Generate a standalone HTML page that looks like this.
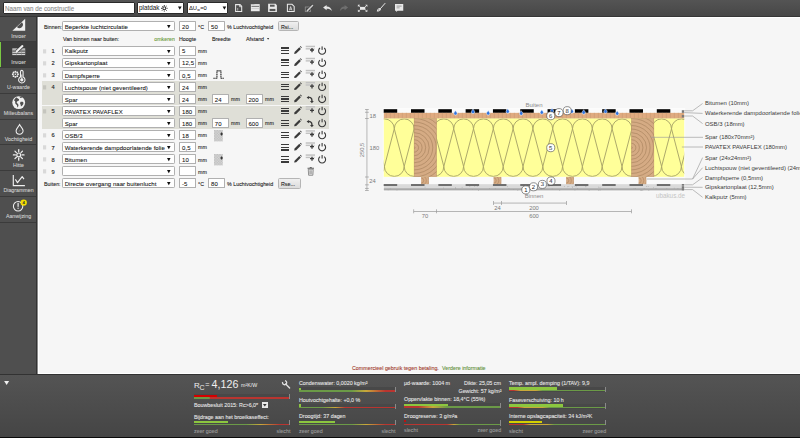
<!DOCTYPE html><html><head><meta charset="utf-8"><style>
*{box-sizing:border-box;margin:0;padding:0}
html,body{width:800px;height:438px;overflow:hidden}
body{background:#f6f6f6;font-family:"Liberation Sans",sans-serif;position:relative;color:#333}
.a{position:absolute;white-space:nowrap}
.t{position:absolute;white-space:nowrap;line-height:1}
.sel{position:absolute;background:#fff;border:1px solid #b0b0b0;border-radius:1.2px}
.v{position:absolute;left:1.8px;top:1.6px;bottom:0;display:flex;align-items:center;color:#111;white-space:nowrap;-webkit-text-stroke:0.07px #111}
.ar{position:absolute;right:2.2px;top:0;bottom:0;display:flex;align-items:center;font-size:5px;color:#111}
.inp{position:absolute;background:#fff;border:1px solid #b0b0b0;border-radius:0.6px}
svg{position:absolute;overflow:visible}
.sbl{position:absolute;left:0;width:37px;text-align:center;font-size:5.8px;color:#d4d4d4;line-height:1;transform:scaleX(0.91);-webkit-text-stroke:0.08px #d4d4d4}
</style></head><body>
<div class="a" style="left:0;top:0;width:800px;height:16.5px;background:linear-gradient(#545454,#474747);border-bottom:1.2px solid #363636"></div>
<div class="a" style="left:37px;top:16.5px;width:763px;height:1px;background:#fff"></div>
<div class="a" style="left:2.5px;top:2.2px;width:132px;height:11.8px;background:#fff;border:0.6px solid #2a2a2a;border-radius:1px"></div>
<div class="t" style="left:5.2px;top:5.80px;font-size:6.8px;color:#8a8a8a;transform:scaleX(0.92);transform-origin:0 50%;-webkit-text-stroke:0.1px #8a8a8a">Naam van de constructie</div>
<div class="a" style="left:136.7px;top:2.2px;width:47.2px;height:11.8px;background:#fff;border:0.6px solid #2a2a2a;border-radius:1px"></div>
<div class="a" style="left:186.7px;top:2.2px;width:41.6px;height:11.8px;background:#fff;border:0.6px solid #2a2a2a;border-radius:1px"></div>
<svg style="left:0;top:0" width="240" height="17" viewBox="0 0 240 17"><g font-family="Liberation Sans" fill="#1a1a1a" stroke="#1a1a1a" stroke-width="0.04"><text x="139" y="9.8" font-size="6.35">platdak</text><text x="189" y="9.6" font-size="5.8">&#916;U</text><text x="197.2" y="11.0" font-size="3.6">w</text><text x="200.2" y="9.6" font-size="5.8">=0</text></g><path d="M178 6.6h3.6l-1.8 3.2z" fill="#111"/><path d="M222.6 6.6h3.6l-1.8 3.2z" fill="#111"/><circle cx="164.3" cy="8.3" r="1.5" fill="none" stroke="#333" stroke-width="1.1"/><line x1="166.60" y1="8.30" x2="167.60" y2="8.30" stroke="#333" stroke-width="1.0"/><line x1="165.93" y1="9.93" x2="166.63" y2="10.63" stroke="#333" stroke-width="1.0"/><line x1="164.30" y1="10.60" x2="164.30" y2="11.60" stroke="#333" stroke-width="1.0"/><line x1="162.67" y1="9.93" x2="161.97" y2="10.63" stroke="#333" stroke-width="1.0"/><line x1="162.00" y1="8.30" x2="161.00" y2="8.30" stroke="#333" stroke-width="1.0"/><line x1="162.67" y1="6.67" x2="161.97" y2="5.97" stroke="#333" stroke-width="1.0"/><line x1="164.30" y1="6.00" x2="164.30" y2="5.00" stroke="#333" stroke-width="1.0"/><line x1="165.93" y1="6.67" x2="166.63" y2="5.97" stroke="#333" stroke-width="1.0"/></svg>
<svg style="left:0;top:0" width="410" height="17" viewBox="0 0 410 17"><path d="M235.6 4.6H240L241.7 6.3V11.4H235.6z" fill="none" stroke="#e8e8e8" stroke-width="1.05"/><path d="M239.6 4.6V6.7H241.7" fill="none" stroke="#e8e8e8" stroke-width="0.8"/><rect x="237.2" y="8.0" width="1.0" height="2.6" fill="#e8e8e8" opacity="0.6"/><rect x="250.9" y="4.1" width="8.8" height="7.15" fill="#e8e8e8"/><rect x="250.9" y="4.1" width="3.5" height="0.9" fill="#bdbdbd"/><rect x="251.5" y="5.9" width="7.6" height="0.8" fill="#555"/><rect x="251.5" y="8.6" width="7.6" height="0.4" fill="#aaa"/><path d="M268.1 3.8H275.5L276.9 5.2V11.9H268.1z" fill="#e8e8e8"/><rect x="270.0" y="4.7" width="4.6" height="2.0" fill="#555"/><rect x="269.6" y="8.9" width="5.8" height="2.2" fill="#555"/><path d="M287.4 4.3H292L294.2 6.5V11.5H287.4z" fill="none" stroke="#e8e8e8" stroke-width="1.05"/><path d="M289.4 10.3L290.6 6.6L291.9 10.3M289.9 9.2H291.4" fill="none" stroke="#e8e8e8" stroke-width="0.75"/><rect x="305.3" y="7.0" width="5.2" height="4.6" fill="none" stroke="#8a8a8a" stroke-width="0.9"/><path d="M307.2 10.8L312.6 5.4" stroke="#2f2f2f" stroke-width="2.6"/><path d="M307.4 10.6L312.5 5.5" stroke="#cfcfcf" stroke-width="1.5" stroke-linecap="round"/><path d="M323.1 7.4L326.6 4.9V6.5C329.5 6.6 331.4 8.2 332.0 11.0C330.6 9.4 329.0 8.8 326.6 8.8V10.2z" fill="#e8e8e8"/><path d="M348.1 7.4L344.6 4.9V6.5C341.7 6.6 340.0 8.2 340.0 11.0C341.4 9.4 342.2 8.8 344.6 8.8V10.2z" fill="#6f6f6f"/><rect x="360.0" y="6.9" width="5.3" height="2.9" fill="#e8e8e8"/><path d="M357.9 4.8h2.2l-2.2 2.2z" fill="#e8e8e8"/><path d="M358.7 5.6l1.6 1.3" stroke="#e8e8e8" stroke-width="0.8"/><path d="M367.4 4.8h-2.2l2.2 2.2z" fill="#e8e8e8"/><path d="M366.59999999999997 5.6l-1.6 1.3" stroke="#e8e8e8" stroke-width="0.8"/><path d="M357.9 11.8h2.2l-2.2 -2.2z" fill="#e8e8e8"/><path d="M358.7 11.0l1.6 -1.3" stroke="#e8e8e8" stroke-width="0.8"/><path d="M367.4 11.8h-2.2l2.2 -2.2z" fill="#e8e8e8"/><path d="M366.59999999999997 11.0l-1.6 -1.3" stroke="#e8e8e8" stroke-width="0.8"/><path d="M385.0 3.4L380.4 8.6" stroke="#e8e8e8" stroke-width="1.0" stroke-linecap="round"/><path d="M379.6 8.0C377.6 8.2 377.2 10.0 376.8 11.5C378.6 11.6 380.6 11.0 381.0 9.2z" fill="#e8e8e8"/><circle cx="378.8" cy="9.9" r="0.6" fill="#666"/><path d="M395.0 4.0H403.25V10.7H397.6L396.2 12.0V10.7H395.0z" fill="#e8e8e8"/><rect x="396.6" y="5.6" width="5.0" height="1.0" fill="#9a9a9a"/><rect x="396.6" y="7.4" width="3.0" height="0.9" fill="#9a9a9a"/></svg>
<div class="a" style="left:0;top:16.5px;width:37px;height:358px;background:#4f4f4f;border-right:1px solid #333"></div>
<div class="a" style="left:37px;top:16.5px;width:1px;height:358px;background:#8a8a8a"></div>
<div class="a" style="left:38px;top:17px;width:1px;height:358px;background:#fff"></div>
<div class="a" style="left:0;top:41.37px;width:36px;height:1px;background:#3b3b3b"></div>
<div class="sbl" style="top:33.80px">Invoer</div>
<div class="a" style="left:0;top:41.97px;width:36px;height:25.77px;background:#3d3d3d"></div>
<div class="a" style="left:0;top:41.97px;width:1.3px;height:25.77px;background:#7ac943"></div>
<div class="a" style="left:0;top:67.14px;width:36px;height:1px;background:#3b3b3b"></div>
<div class="sbl" style="top:59.57px">Invoer</div>
<div class="a" style="left:0;top:92.91px;width:36px;height:1px;background:#3b3b3b"></div>
<div class="sbl" style="top:85.34px">U-waarde</div>
<div class="a" style="left:0;top:118.68px;width:36px;height:1px;background:#3b3b3b"></div>
<div class="sbl" style="top:111.11px">Milieubalans</div>
<div class="a" style="left:0;top:144.45px;width:36px;height:1px;background:#3b3b3b"></div>
<div class="sbl" style="top:136.88px">Vochtigheid</div>
<div class="a" style="left:0;top:170.22px;width:36px;height:1px;background:#3b3b3b"></div>
<div class="sbl" style="top:162.65px">Hitte</div>
<div class="a" style="left:0;top:195.99px;width:36px;height:1px;background:#3b3b3b"></div>
<div class="sbl" style="top:188.42px">Diagrammen</div>
<div class="a" style="left:0;top:221.76px;width:36px;height:1px;background:#3b3b3b"></div>
<div class="sbl" style="top:214.19px">Aanwijzing</div>
<svg style="left:0;top:0" width="37" height="230" viewBox="0 0 37 230"><path d="M12.4 30.8L25.2 18.7V30.8z" fill="#f0f0f0"/><path d="M16.9 27.0A3.3 3.3 0 0 0 21.9 22.3z" fill="#4f4f4f"/><rect x="12.3" y="48.4" width="12.9" height="6.7" fill="#d8d8d8"/><rect x="12.3" y="49.8" width="12.9" height="0.7" fill="#3d3d3d"/><rect x="12.3" y="51.4" width="12.9" height="0.7" fill="#3d3d3d"/><rect x="12.3" y="53.0" width="12.9" height="0.7" fill="#3d3d3d"/><rect x="16.2" y="48.4" width="0.5" height="6.7" fill="#8a8a8a"/><rect x="21.3" y="48.4" width="0.5" height="6.7" fill="#8a8a8a"/><path d="M16.6 51.6L22.6 45.9" stroke="#3d3d3d" stroke-width="3.4"/><path d="M16.9 51.2L22.4 46.1" stroke="#f0f0f0" stroke-width="2.1" stroke-linecap="round"/><path d="M15.6 52.9L16.5 51.3 17.6 52.2z" fill="#f0f0f0"/><circle cx="18.00" cy="74.30" r="0.95" fill="#f0f0f0"/><circle cx="17.24" cy="76.14" r="0.95" fill="#f0f0f0"/><circle cx="15.40" cy="76.90" r="0.95" fill="#f0f0f0"/><circle cx="13.56" cy="76.14" r="0.95" fill="#f0f0f0"/><circle cx="12.80" cy="74.30" r="0.95" fill="#f0f0f0"/><circle cx="13.56" cy="72.46" r="0.95" fill="#f0f0f0"/><circle cx="15.40" cy="71.70" r="0.95" fill="#f0f0f0"/><circle cx="17.24" cy="72.46" r="0.95" fill="#f0f0f0"/><circle cx="15.4" cy="74.3" r="0.8" fill="#f0f0f0"/><path d="M20.5 76.9V71.7a1.3 1.3 0 0 1 2.6 0V76.9a3.2 3.2 0 1 1 -2.6 0z" fill="none" stroke="#f0f0f0" stroke-width="1.05"/><circle cx="21.8" cy="79.8" r="1.6" fill="#f0f0f0"/><rect x="21.35" y="74.5" width="0.9" height="5" fill="#f0f0f0"/><circle cx="18.7" cy="102.6" r="6.4" fill="#f0f0f0"/><path d="M16.6 97.2c-1.2 0.8-2.4 2.0-2.6 3.4c0.8 0.2 1.4 0.8 1.2 1.8c-0.2 1.2 0.8 1.8 1.6 2.6c0.4 0.6 0.2 1.6 0.6 2.4c0.8-0.6 1.2-1.6 1.0-2.6c-0.2-0.8-1.2-1.2-1.6-2.0c-0.4-0.8 0.4-1.6 1.2-1.8c1.0-0.2 1.4-1.2 0.8-2.0c-0.6-0.6-1.8-0.6-2.2-1.8z" fill="#4f4f4f"/><path d="M20.6 101.8c0.8 0.2 1.6-0.2 2.4 0.2c0.6 0.4 0.6 1.4 0.2 2.2c-0.4 1.0-1.2 1.8-2.2 2.4c-0.4-0.8 0-1.8-0.6-2.4c-0.6-0.6-0.2-1.6 0.2-2.4z" fill="#4f4f4f"/><path d="M19.6 96.8c1.0 0 2.0 0.4 2.6 1.0c-0.6 0.4-1.4 0.2-2.0 0c-0.4-0.2-0.6-0.6-0.6-1.0z" fill="#4f4f4f"/><path d="M19.6 124.6C18.6 126.6 16.1 128.6 16.1 130.7a3.5 3.5 0 0 0 7 0C23.1 128.6 20.6 126.6 19.6 124.6z" fill="none" stroke="#f0f0f0" stroke-width="1.05"/><path d="M19.0 131.8a1.2 1.2 0 0 1 1.6-1.4" fill="none" stroke="#9a9a9a" stroke-width="0.6"/><circle cx="18.7" cy="154.9" r="1.9" fill="none" stroke="#f0f0f0" stroke-width="1.2"/><line x1="18.70" y1="151.60" x2="18.70" y2="149.60" stroke="#f0f0f0" stroke-width="1.25" stroke-linecap="round"/><line x1="21.03" y1="152.57" x2="22.45" y2="151.15" stroke="#f0f0f0" stroke-width="1.25" stroke-linecap="round"/><line x1="22.00" y1="154.90" x2="24.00" y2="154.90" stroke="#f0f0f0" stroke-width="1.25" stroke-linecap="round"/><line x1="21.03" y1="157.23" x2="22.45" y2="158.65" stroke="#f0f0f0" stroke-width="1.25" stroke-linecap="round"/><line x1="18.70" y1="158.20" x2="18.70" y2="160.20" stroke="#f0f0f0" stroke-width="1.25" stroke-linecap="round"/><line x1="16.37" y1="157.23" x2="14.95" y2="158.65" stroke="#f0f0f0" stroke-width="1.25" stroke-linecap="round"/><line x1="15.40" y1="154.90" x2="13.40" y2="154.90" stroke="#f0f0f0" stroke-width="1.25" stroke-linecap="round"/><line x1="16.37" y1="152.57" x2="14.95" y2="151.15" stroke="#f0f0f0" stroke-width="1.25" stroke-linecap="round"/><path d="M13.3 175V185.6H24.9" fill="none" stroke="#f0f0f0" stroke-width="1.15"/><path d="M15.4 179.4L17.5 182.7L22.2 176.7L24 179.1" fill="none" stroke="#f0f0f0" stroke-width="1.15" stroke-linejoin="round"/><circle cx="18.1" cy="206.2" r="4.7" fill="none" stroke="#f0f0f0" stroke-width="1.05"/><rect x="17.5" y="202.9" width="1.2" height="3.9" fill="#f0f0f0"/><rect x="17.5" y="207.7" width="1.2" height="1.1" fill="#f0f0f0"/><circle cx="23.7" cy="202.6" r="3.2" fill="#f2dc00"/><text x="23.7" y="204.2" font-size="4.3" text-anchor="middle" fill="#333" font-family="Liberation Sans" font-weight="bold">4</text></svg>
<div class="a" style="left:41.8px;top:81px;width:287.4px;height:24.2px;background:#dfdfd7"></div>
<div class="a" style="left:41.8px;top:105.7px;width:287.4px;height:23.3px;background:#dfdfd7"></div>
<div class="t" style="left:44px;top:24.76px;font-size:5.9px;color:#1c1c1c;transform:scaleX(0.905);transform-origin:0 50%;-webkit-text-stroke:0.1px #1c1c1c;">Binnen:</div>
<div class="sel" style="left:62.4px;top:21.46px;width:112.19999999999999px;height:10.0px;border-color:#b0b0b0"><div class="v" style="left:1.3px;font-size:6.0px;letter-spacing:0.05px">Beperkte luchtcirculatie</div><svg style="right:3.4px;top:3px" width="3.6" height="3.2" viewBox="0 0 10 9"><path d="M0 0h10L5 9z" fill="#111"/></svg></div>
<div class="inp" style="left:179.2px;top:21.46px;width:16.80000000000001px;height:10.0px"><div class="v" style="left:1.8px;font-size:6.0px;letter-spacing:0.1px">20</div></div>
<div class="t" style="left:197.5px;top:24.76px;font-size:5.9px;color:#1c1c1c;transform:scaleX(0.905);transform-origin:0 50%;-webkit-text-stroke:0.1px #1c1c1c;">&deg;C</div>
<div class="inp" style="left:208.2px;top:21.46px;width:16.600000000000023px;height:10.0px"><div class="v" style="left:1.8px;font-size:6.0px;letter-spacing:0.1px">50</div></div>
<div class="t" style="left:226.8px;top:24.76px;font-size:5.9px;color:#1c1c1c;transform:scaleX(0.905);transform-origin:0 50%;-webkit-text-stroke:0.1px #1c1c1c;">% Luchtvochtigheid</div>
<div class="a" style="left:278.2px;top:21.26px;width:20.6px;height:10.2px;background:linear-gradient(#f0f0f0,#dcdcdc);border:0.8px solid #b5b5b5;border-radius:1.5px"></div>
<div class="t" style="left:281.2px;top:24.76px;font-size:5.9px;color:#1c1c1c;transform:scaleX(0.905);transform-origin:0 50%;-webkit-text-stroke:0.1px #1c1c1c;">Rsi...</div>
<div class="t" style="left:62.6px;top:36.83px;font-size:5.9px;color:#1c1c1c;transform:scaleX(0.905);transform-origin:0 50%;-webkit-text-stroke:0.1px #1c1c1c;">Van binnen naar buiten:</div>
<div class="t" style="right:625.2px;top:36.83px;font-size:5.9px;color:#6a9a3a;text-align:right;transform:scaleX(0.905);transform-origin:100% 50%;-webkit-text-stroke:0.1px #6a9a3a;">omkeren</div>
<div class="t" style="left:179.3px;top:36.83px;font-size:5.9px;color:#1c1c1c;transform:scaleX(0.905);transform-origin:0 50%;-webkit-text-stroke:0.1px #1c1c1c;">Hoogte</div>
<div class="t" style="left:212px;top:36.83px;font-size:5.9px;color:#1c1c1c;transform:scaleX(0.905);transform-origin:0 50%;-webkit-text-stroke:0.1px #1c1c1c;">Breedte</div>
<div class="t" style="left:246px;top:36.83px;font-size:5.9px;color:#1c1c1c;transform:scaleX(0.905);transform-origin:0 50%;-webkit-text-stroke:0.1px #1c1c1c;">Afstand</div>
<svg style="left:267.2px;top:38.33px" width="2.2" height="1.8" viewBox="0 0 10 8"><path d="M0 0h10L5 8z" fill="#333"/></svg>
<svg style="left:43.3px;top:48.50px" width="3.2" height="4.6" viewBox="0 0 3.2 4.6"><rect x="0" y="0" width="3.2" height="4.6" fill="rgba(0,0,0,0.085)"/><g fill="rgba(0,0,0,0.06)"><rect x="0" y="1.1" width="3.2" height="0.5"/><rect x="0" y="2.3" width="3.2" height="0.5"/><rect x="0" y="3.5" width="3.2" height="0.5"/></g></svg>
<div class="t" style="left:51.6px;top:49.00px;font-size:5.7px;color:#222;-webkit-text-stroke:0.12px #222">1</div>
<div class="sel" style="left:62.4px;top:45.6px;width:112.19999999999999px;height:10.0px;border-color:#b0b0b0"><div class="v" style="left:1.3px;font-size:6.0px;letter-spacing:0.05px">Kalkputz</div><svg style="right:3.4px;top:3px" width="3.6" height="3.2" viewBox="0 0 10 9"><path d="M0 0h10L5 9z" fill="#111"/></svg></div>
<div class="inp" style="left:179.2px;top:45.6px;width:16.80000000000001px;height:10.0px"><div class="v" style="left:1.8px;font-size:6.0px;letter-spacing:0.1px">5</div></div>
<div class="t" style="left:197.6px;top:48.90px;font-size:5.9px;color:#1c1c1c;transform:scaleX(0.905);transform-origin:0 50%;-webkit-text-stroke:0.1px #1c1c1c;">mm</div>
<div class="a" style="left:281.1px;top:47.40px;width:7.8px;height:1.2px;background:#3a3a3a"></div>
<div class="a" style="left:281.1px;top:50.10px;width:7.8px;height:1.2px;background:#3a3a3a"></div>
<div class="a" style="left:281.1px;top:52.80px;width:7.8px;height:1.2px;background:#3a3a3a"></div>
<svg style="left:0;top:0" width="800" height="438" viewBox="0 0 800 438"><path d="M294.1 53.90L294.6 52.00L299.3 47.30L300.9 48.90L296.2 53.60z" fill="#3a3a3a"/><path d="M299.9 46.70L300.5 46.10L301.9 47.50L301.3 48.10z" fill="#3a3a3a"/><rect x="305.7" y="45.70" width="9.3" height="1.5" fill="#c2c2c2"/><rect x="305.7" y="48.10" width="4.6" height="1.4" fill="#c2c2c2"/><rect x="310.3" y="48.10" width="4.7" height="1.4" fill="#dadada"/><path d="M310 50.00H314M312 48.00V52.20" stroke="#3a3a3a" stroke-width="1.3"/><path d="M320.0 48.00A3.5 3.5 0 1 0 324.2 48.00" fill="none" stroke="#3a3a3a" stroke-width="1.1"/><rect x="321.55" y="46.40" width="1.1" height="3.5" fill="#3a3a3a"/></svg>
<svg style="left:43.3px;top:60.57px" width="3.2" height="4.6" viewBox="0 0 3.2 4.6"><rect x="0" y="0" width="3.2" height="4.6" fill="rgba(0,0,0,0.085)"/><g fill="rgba(0,0,0,0.06)"><rect x="0" y="1.1" width="3.2" height="0.5"/><rect x="0" y="2.3" width="3.2" height="0.5"/><rect x="0" y="3.5" width="3.2" height="0.5"/></g></svg>
<div class="t" style="left:51.6px;top:61.07px;font-size:5.7px;color:#222;-webkit-text-stroke:0.12px #222">2</div>
<div class="sel" style="left:62.4px;top:57.67px;width:112.19999999999999px;height:10.0px;border-color:#b0b0b0"><div class="v" style="left:1.3px;font-size:6.0px;letter-spacing:0.05px">Gipskartonplaat</div><svg style="right:3.4px;top:3px" width="3.6" height="3.2" viewBox="0 0 10 9"><path d="M0 0h10L5 9z" fill="#111"/></svg></div>
<div class="inp" style="left:179.2px;top:57.67px;width:16.80000000000001px;height:10.0px"><div class="v" style="left:1.8px;font-size:6.0px;letter-spacing:0.1px">12,5</div></div>
<div class="t" style="left:197.6px;top:60.97px;font-size:5.9px;color:#1c1c1c;transform:scaleX(0.905);transform-origin:0 50%;-webkit-text-stroke:0.1px #1c1c1c;">mm</div>
<div class="a" style="left:281.1px;top:59.47px;width:7.8px;height:1.2px;background:#3a3a3a"></div>
<div class="a" style="left:281.1px;top:62.17px;width:7.8px;height:1.2px;background:#3a3a3a"></div>
<div class="a" style="left:281.1px;top:64.87px;width:7.8px;height:1.2px;background:#3a3a3a"></div>
<svg style="left:0;top:0" width="800" height="438" viewBox="0 0 800 438"><path d="M294.1 65.97L294.6 64.07L299.3 59.37L300.9 60.97L296.2 65.67z" fill="#3a3a3a"/><path d="M299.9 58.77L300.5 58.17L301.9 59.57L301.3 60.17z" fill="#3a3a3a"/><rect x="305.7" y="57.77" width="9.3" height="1.5" fill="#c2c2c2"/><rect x="305.7" y="60.17" width="4.6" height="1.4" fill="#c2c2c2"/><rect x="310.3" y="60.17" width="4.7" height="1.4" fill="#dadada"/><path d="M310 62.07H314M312 60.07V64.27" stroke="#3a3a3a" stroke-width="1.3"/><path d="M320.0 60.07A3.5 3.5 0 1 0 324.2 60.07" fill="none" stroke="#3a3a3a" stroke-width="1.1"/><rect x="321.55" y="58.47" width="1.1" height="3.5" fill="#3a3a3a"/></svg>
<svg style="left:43.3px;top:72.64px" width="3.2" height="4.6" viewBox="0 0 3.2 4.6"><rect x="0" y="0" width="3.2" height="4.6" fill="rgba(0,0,0,0.085)"/><g fill="rgba(0,0,0,0.06)"><rect x="0" y="1.1" width="3.2" height="0.5"/><rect x="0" y="2.3" width="3.2" height="0.5"/><rect x="0" y="3.5" width="3.2" height="0.5"/></g></svg>
<div class="t" style="left:51.6px;top:73.14px;font-size:5.7px;color:#222;-webkit-text-stroke:0.12px #222">3</div>
<div class="sel" style="left:62.4px;top:69.74000000000001px;width:112.19999999999999px;height:10.0px;border-color:#b0b0b0"><div class="v" style="left:1.3px;font-size:6.0px;letter-spacing:0.05px">Dampfsperre</div><svg style="right:3.4px;top:3px" width="3.6" height="3.2" viewBox="0 0 10 9"><path d="M0 0h10L5 9z" fill="#111"/></svg></div>
<div class="inp" style="left:179.2px;top:69.74000000000001px;width:16.80000000000001px;height:10.0px"><div class="v" style="left:1.8px;font-size:6.0px;letter-spacing:0.1px">0,5</div></div>
<div class="t" style="left:197.6px;top:73.04px;font-size:5.9px;color:#1c1c1c;transform:scaleX(0.905);transform-origin:0 50%;-webkit-text-stroke:0.1px #1c1c1c;">mm</div>
<svg style="left:0;top:0" width="800" height="438" viewBox="0 0 800 438"><path d="M213.5 78.44H216.9V70.74H220.9V78.44H224" fill="none" stroke="#a0a0a0" stroke-width="1.3"/><path d="M213.5 78.44H216.9V70.74H220.9V78.44H224" fill="none" stroke="#555" stroke-width="1.3" stroke-dasharray="1 1.3"/></svg>
<div class="a" style="left:281.1px;top:71.54px;width:7.8px;height:1.2px;background:#3a3a3a"></div>
<div class="a" style="left:281.1px;top:74.24px;width:7.8px;height:1.2px;background:#3a3a3a"></div>
<div class="a" style="left:281.1px;top:76.94px;width:7.8px;height:1.2px;background:#3a3a3a"></div>
<svg style="left:0;top:0" width="800" height="438" viewBox="0 0 800 438"><path d="M294.1 78.04L294.6 76.14L299.3 71.44L300.9 73.04L296.2 77.74z" fill="#3a3a3a"/><path d="M299.9 70.84L300.5 70.24L301.9 71.64L301.3 72.24z" fill="#3a3a3a"/><rect x="305.7" y="69.84" width="9.3" height="1.5" fill="#c2c2c2"/><rect x="305.7" y="72.24" width="4.6" height="1.4" fill="#c2c2c2"/><rect x="310.3" y="72.24" width="4.7" height="1.4" fill="#dadada"/><path d="M310 74.14H314M312 72.14V76.34" stroke="#3a3a3a" stroke-width="1.3"/><path d="M320.0 72.14A3.5 3.5 0 1 0 324.2 72.14" fill="none" stroke="#3a3a3a" stroke-width="1.1"/><rect x="321.55" y="70.54" width="1.1" height="3.5" fill="#3a3a3a"/></svg>
<svg style="left:43.3px;top:84.71px" width="3.2" height="4.6" viewBox="0 0 3.2 4.6"><rect x="0" y="0" width="3.2" height="4.6" fill="rgba(0,0,0,0.085)"/><g fill="rgba(0,0,0,0.06)"><rect x="0" y="1.1" width="3.2" height="0.5"/><rect x="0" y="2.3" width="3.2" height="0.5"/><rect x="0" y="3.5" width="3.2" height="0.5"/></g></svg>
<div class="t" style="left:51.6px;top:85.21px;font-size:5.7px;color:#222;-webkit-text-stroke:0.12px #222">4</div>
<div class="sel" style="left:62.4px;top:81.81px;width:112.19999999999999px;height:10.0px;border-color:#b0b0b0"><div class="v" style="left:1.3px;font-size:6.0px;letter-spacing:0.05px">Luchtspouw (niet geventileerd)</div><svg style="right:3.4px;top:3px" width="3.6" height="3.2" viewBox="0 0 10 9"><path d="M0 0h10L5 9z" fill="#111"/></svg></div>
<div class="inp" style="left:179.2px;top:81.81px;width:16.80000000000001px;height:10.0px"><div class="v" style="left:1.8px;font-size:6.0px;letter-spacing:0.1px">24</div></div>
<div class="t" style="left:197.6px;top:85.11px;font-size:5.9px;color:#1c1c1c;transform:scaleX(0.905);transform-origin:0 50%;-webkit-text-stroke:0.1px #1c1c1c;">mm</div>
<div class="a" style="left:281.1px;top:83.61px;width:7.8px;height:1.2px;background:#3a3a3a"></div>
<div class="a" style="left:281.1px;top:86.31px;width:7.8px;height:1.2px;background:#3a3a3a"></div>
<div class="a" style="left:281.1px;top:89.01px;width:7.8px;height:1.2px;background:#3a3a3a"></div>
<svg style="left:0;top:0" width="800" height="438" viewBox="0 0 800 438"><path d="M294.1 90.11L294.6 88.21L299.3 83.51L300.9 85.11L296.2 89.81z" fill="#3a3a3a"/><path d="M299.9 82.91L300.5 82.31L301.9 83.71L301.3 84.31z" fill="#3a3a3a"/><rect x="305.7" y="81.91" width="9.3" height="1.5" fill="#c2c2c2"/><rect x="305.7" y="84.31" width="4.6" height="1.4" fill="#c2c2c2"/><rect x="310.3" y="84.31" width="4.7" height="1.4" fill="#dadada"/><path d="M310 86.21H314M312 84.21V88.41" stroke="#3a3a3a" stroke-width="1.3"/><path d="M320.0 84.21A3.5 3.5 0 1 0 324.2 84.21" fill="none" stroke="#3a3a3a" stroke-width="1.1"/><rect x="321.55" y="82.61" width="1.1" height="3.5" fill="#3a3a3a"/></svg>
<div class="sel" style="left:62.4px;top:93.88px;width:112.19999999999999px;height:10.0px;border-color:#b0b0b0"><div class="v" style="left:1.3px;font-size:6.0px;letter-spacing:0.05px">Spar</div><svg style="right:3.4px;top:3px" width="3.6" height="3.2" viewBox="0 0 10 9"><path d="M0 0h10L5 9z" fill="#111"/></svg></div>
<div class="inp" style="left:179.2px;top:93.88px;width:16.80000000000001px;height:10.0px"><div class="v" style="left:1.8px;font-size:6.0px;letter-spacing:0.1px">24</div></div>
<div class="t" style="left:197.6px;top:97.18px;font-size:5.9px;color:#1c1c1c;transform:scaleX(0.905);transform-origin:0 50%;-webkit-text-stroke:0.1px #1c1c1c;">mm</div>
<div class="inp" style="left:212px;top:93.88px;width:17.19999999999999px;height:10.0px"><div class="v" style="left:1.8px;font-size:6.0px;letter-spacing:0.1px">24</div></div>
<div class="t" style="left:231.2px;top:97.18px;font-size:5.9px;color:#1c1c1c;transform:scaleX(0.905);transform-origin:0 50%;-webkit-text-stroke:0.1px #1c1c1c;">mm</div>
<div class="inp" style="left:245.6px;top:93.88px;width:17.200000000000017px;height:10.0px"><div class="v" style="left:1.8px;font-size:6.0px;letter-spacing:0.1px">200</div></div>
<div class="t" style="left:264.6px;top:97.18px;font-size:5.9px;color:#1c1c1c;transform:scaleX(0.905);transform-origin:0 50%;-webkit-text-stroke:0.1px #1c1c1c;">mm</div>
<div class="a" style="left:281.1px;top:95.68px;width:7.8px;height:1.2px;background:#3a3a3a"></div>
<div class="a" style="left:281.1px;top:98.38px;width:7.8px;height:1.2px;background:#3a3a3a"></div>
<div class="a" style="left:281.1px;top:101.08px;width:7.8px;height:1.2px;background:#3a3a3a"></div>
<svg style="left:0;top:0" width="800" height="438" viewBox="0 0 800 438"><path d="M294.1 102.18L294.6 100.28L299.3 95.58L300.9 97.18L296.2 101.88z" fill="#3a3a3a"/><path d="M299.9 94.98L300.5 94.38L301.9 95.78L301.3 96.38z" fill="#3a3a3a"/><path d="M307.9 97.58C309.5 97.08 311.9 97.48 311.9 100.08V101.48" fill="none" stroke="#3a3a3a" stroke-width="1.4"/><path d="M306.6 97.48L308.9 95.88L308.9 99.18z" fill="#3a3a3a"/><path d="M310.0 100.88H313.8L311.9 103.18z" fill="#3a3a3a"/><path d="M320.0 96.28A3.5 3.5 0 1 0 324.2 96.28" fill="none" stroke="#3a3a3a" stroke-width="1.1"/><rect x="321.55" y="94.68" width="1.1" height="3.5" fill="#3a3a3a"/></svg>
<svg style="left:43.3px;top:108.85px" width="3.2" height="4.6" viewBox="0 0 3.2 4.6"><rect x="0" y="0" width="3.2" height="4.6" fill="rgba(0,0,0,0.085)"/><g fill="rgba(0,0,0,0.06)"><rect x="0" y="1.1" width="3.2" height="0.5"/><rect x="0" y="2.3" width="3.2" height="0.5"/><rect x="0" y="3.5" width="3.2" height="0.5"/></g></svg>
<div class="t" style="left:51.6px;top:109.35px;font-size:5.7px;color:#222;-webkit-text-stroke:0.12px #222">5</div>
<div class="sel" style="left:62.4px;top:105.95px;width:112.19999999999999px;height:10.0px;border-color:#b0b0b0"><div class="v" style="left:1.3px;font-size:6.0px;letter-spacing:0.05px">PAVATEX PAVAFLEX</div><svg style="right:3.4px;top:3px" width="3.6" height="3.2" viewBox="0 0 10 9"><path d="M0 0h10L5 9z" fill="#111"/></svg></div>
<div class="inp" style="left:179.2px;top:105.95px;width:16.80000000000001px;height:10.0px"><div class="v" style="left:1.8px;font-size:6.0px;letter-spacing:0.1px">180</div></div>
<div class="t" style="left:197.6px;top:109.25px;font-size:5.9px;color:#1c1c1c;transform:scaleX(0.905);transform-origin:0 50%;-webkit-text-stroke:0.1px #1c1c1c;">mm</div>
<div class="a" style="left:281.1px;top:107.75px;width:7.8px;height:1.2px;background:#3a3a3a"></div>
<div class="a" style="left:281.1px;top:110.45px;width:7.8px;height:1.2px;background:#3a3a3a"></div>
<div class="a" style="left:281.1px;top:113.15px;width:7.8px;height:1.2px;background:#3a3a3a"></div>
<svg style="left:0;top:0" width="800" height="438" viewBox="0 0 800 438"><path d="M294.1 114.25L294.6 112.35L299.3 107.65L300.9 109.25L296.2 113.95z" fill="#3a3a3a"/><path d="M299.9 107.05L300.5 106.45L301.9 107.85L301.3 108.45z" fill="#3a3a3a"/><rect x="305.7" y="106.05" width="9.3" height="1.5" fill="#c2c2c2"/><rect x="305.7" y="108.45" width="4.6" height="1.4" fill="#c2c2c2"/><rect x="310.3" y="108.45" width="4.7" height="1.4" fill="#dadada"/><path d="M310 110.35H314M312 108.35V112.55" stroke="#3a3a3a" stroke-width="1.3"/><path d="M320.0 108.35A3.5 3.5 0 1 0 324.2 108.35" fill="none" stroke="#3a3a3a" stroke-width="1.1"/><rect x="321.55" y="106.75" width="1.1" height="3.5" fill="#3a3a3a"/></svg>
<div class="sel" style="left:62.4px;top:118.02000000000001px;width:112.19999999999999px;height:10.0px;border-color:#b0b0b0"><div class="v" style="left:1.3px;font-size:6.0px;letter-spacing:0.05px">Spar</div><svg style="right:3.4px;top:3px" width="3.6" height="3.2" viewBox="0 0 10 9"><path d="M0 0h10L5 9z" fill="#111"/></svg></div>
<div class="inp" style="left:179.2px;top:118.02000000000001px;width:16.80000000000001px;height:10.0px"><div class="v" style="left:1.8px;font-size:6.0px;letter-spacing:0.1px">180</div></div>
<div class="t" style="left:197.6px;top:121.32px;font-size:5.9px;color:#1c1c1c;transform:scaleX(0.905);transform-origin:0 50%;-webkit-text-stroke:0.1px #1c1c1c;">mm</div>
<div class="inp" style="left:212px;top:118.02000000000001px;width:17.19999999999999px;height:10.0px"><div class="v" style="left:1.8px;font-size:6.0px;letter-spacing:0.1px">70</div></div>
<div class="t" style="left:231.2px;top:121.32px;font-size:5.9px;color:#1c1c1c;transform:scaleX(0.905);transform-origin:0 50%;-webkit-text-stroke:0.1px #1c1c1c;">mm</div>
<div class="inp" style="left:245.6px;top:118.02000000000001px;width:17.200000000000017px;height:10.0px"><div class="v" style="left:1.8px;font-size:6.0px;letter-spacing:0.1px">600</div></div>
<div class="t" style="left:264.6px;top:121.32px;font-size:5.9px;color:#1c1c1c;transform:scaleX(0.905);transform-origin:0 50%;-webkit-text-stroke:0.1px #1c1c1c;">mm</div>
<div class="a" style="left:281.1px;top:119.82px;width:7.8px;height:1.2px;background:#3a3a3a"></div>
<div class="a" style="left:281.1px;top:122.52px;width:7.8px;height:1.2px;background:#3a3a3a"></div>
<div class="a" style="left:281.1px;top:125.22px;width:7.8px;height:1.2px;background:#3a3a3a"></div>
<svg style="left:0;top:0" width="800" height="438" viewBox="0 0 800 438"><path d="M294.1 126.32L294.6 124.42L299.3 119.72L300.9 121.32L296.2 126.02z" fill="#3a3a3a"/><path d="M299.9 119.12L300.5 118.52L301.9 119.92L301.3 120.52z" fill="#3a3a3a"/><path d="M307.9 121.72C309.5 121.22 311.9 121.62 311.9 124.22V125.62" fill="none" stroke="#3a3a3a" stroke-width="1.4"/><path d="M306.6 121.62L308.9 120.02L308.9 123.32z" fill="#3a3a3a"/><path d="M310.0 125.02H313.8L311.9 127.32z" fill="#3a3a3a"/><path d="M320.0 120.42A3.5 3.5 0 1 0 324.2 120.42" fill="none" stroke="#3a3a3a" stroke-width="1.1"/><rect x="321.55" y="118.82" width="1.1" height="3.5" fill="#3a3a3a"/></svg>
<svg style="left:43.3px;top:132.99px" width="3.2" height="4.6" viewBox="0 0 3.2 4.6"><rect x="0" y="0" width="3.2" height="4.6" fill="rgba(0,0,0,0.085)"/><g fill="rgba(0,0,0,0.06)"><rect x="0" y="1.1" width="3.2" height="0.5"/><rect x="0" y="2.3" width="3.2" height="0.5"/><rect x="0" y="3.5" width="3.2" height="0.5"/></g></svg>
<div class="t" style="left:51.6px;top:133.49px;font-size:5.7px;color:#222;-webkit-text-stroke:0.12px #222">6</div>
<div class="sel" style="left:62.4px;top:130.09px;width:112.19999999999999px;height:10.0px;border-color:#b0b0b0"><div class="v" style="left:1.3px;font-size:6.0px;letter-spacing:0.05px">OSB/3</div><svg style="right:3.4px;top:3px" width="3.6" height="3.2" viewBox="0 0 10 9"><path d="M0 0h10L5 9z" fill="#111"/></svg></div>
<div class="inp" style="left:179.2px;top:130.09px;width:16.80000000000001px;height:10.0px"><div class="v" style="left:1.8px;font-size:6.0px;letter-spacing:0.1px">18</div></div>
<div class="t" style="left:197.6px;top:133.39px;font-size:5.9px;color:#1c1c1c;transform:scaleX(0.905);transform-origin:0 50%;-webkit-text-stroke:0.1px #1c1c1c;">mm</div>
<svg style="left:214.3px;top:129.59px" width="9.5" height="11.4" viewBox="0 0 9.5 11.4"><defs><pattern id="chk7" width="1.6" height="1.6" patternUnits="userSpaceOnUse"><rect width="1.6" height="1.6" fill="#d9d9d9"/><rect width="0.8" height="0.8" fill="#bcbcbc"/><rect x="0.8" y="0.8" width="0.8" height="0.8" fill="#bcbcbc"/></pattern></defs><rect x="0" y="0" width="8.8" height="11.4" fill="url(#chk7)"/><path d="M6.2 4.0h2.8M7.6 2.6v2.8" stroke="#333" stroke-width="1.1"/></svg>
<div class="a" style="left:281.1px;top:131.89px;width:7.8px;height:1.2px;background:#3a3a3a"></div>
<div class="a" style="left:281.1px;top:134.59px;width:7.8px;height:1.2px;background:#3a3a3a"></div>
<div class="a" style="left:281.1px;top:137.29px;width:7.8px;height:1.2px;background:#3a3a3a"></div>
<svg style="left:0;top:0" width="800" height="438" viewBox="0 0 800 438"><path d="M294.1 138.39L294.6 136.49L299.3 131.79L300.9 133.39L296.2 138.09z" fill="#3a3a3a"/><path d="M299.9 131.19L300.5 130.59L301.9 131.99L301.3 132.59z" fill="#3a3a3a"/><rect x="305.7" y="130.19" width="9.3" height="1.5" fill="#c2c2c2"/><rect x="305.7" y="132.59" width="4.6" height="1.4" fill="#c2c2c2"/><rect x="310.3" y="132.59" width="4.7" height="1.4" fill="#dadada"/><path d="M310 134.49H314M312 132.49V136.69" stroke="#3a3a3a" stroke-width="1.3"/><path d="M320.0 132.49A3.5 3.5 0 1 0 324.2 132.49" fill="none" stroke="#3a3a3a" stroke-width="1.1"/><rect x="321.55" y="130.89" width="1.1" height="3.5" fill="#3a3a3a"/></svg>
<svg style="left:43.3px;top:145.06px" width="3.2" height="4.6" viewBox="0 0 3.2 4.6"><rect x="0" y="0" width="3.2" height="4.6" fill="rgba(0,0,0,0.085)"/><g fill="rgba(0,0,0,0.06)"><rect x="0" y="1.1" width="3.2" height="0.5"/><rect x="0" y="2.3" width="3.2" height="0.5"/><rect x="0" y="3.5" width="3.2" height="0.5"/></g></svg>
<div class="t" style="left:51.6px;top:145.56px;font-size:5.7px;color:#222;-webkit-text-stroke:0.12px #222">7</div>
<div class="sel" style="left:62.4px;top:142.16px;width:112.19999999999999px;height:10.0px;border-color:#b0b0b0"><div class="v" style="left:1.3px;font-size:6.0px;letter-spacing:0.05px">Waterkerende dampdoorlatende folie</div><svg style="right:3.4px;top:3px" width="3.6" height="3.2" viewBox="0 0 10 9"><path d="M0 0h10L5 9z" fill="#111"/></svg></div>
<div class="inp" style="left:179.2px;top:142.16px;width:16.80000000000001px;height:10.0px"><div class="v" style="left:1.8px;font-size:6.0px;letter-spacing:0.1px">0,5</div></div>
<div class="t" style="left:197.6px;top:145.46px;font-size:5.9px;color:#1c1c1c;transform:scaleX(0.905);transform-origin:0 50%;-webkit-text-stroke:0.1px #1c1c1c;">mm</div>
<div class="a" style="left:281.1px;top:143.96px;width:7.8px;height:1.2px;background:#3a3a3a"></div>
<div class="a" style="left:281.1px;top:146.66px;width:7.8px;height:1.2px;background:#3a3a3a"></div>
<div class="a" style="left:281.1px;top:149.36px;width:7.8px;height:1.2px;background:#3a3a3a"></div>
<svg style="left:0;top:0" width="800" height="438" viewBox="0 0 800 438"><path d="M294.1 150.46L294.6 148.56L299.3 143.86L300.9 145.46L296.2 150.16z" fill="#3a3a3a"/><path d="M299.9 143.26L300.5 142.66L301.9 144.06L301.3 144.66z" fill="#3a3a3a"/><rect x="305.7" y="142.26" width="9.3" height="1.5" fill="#c2c2c2"/><rect x="305.7" y="144.66" width="4.6" height="1.4" fill="#c2c2c2"/><rect x="310.3" y="144.66" width="4.7" height="1.4" fill="#dadada"/><path d="M310 146.56H314M312 144.56V148.76" stroke="#3a3a3a" stroke-width="1.3"/><path d="M320.0 144.56A3.5 3.5 0 1 0 324.2 144.56" fill="none" stroke="#3a3a3a" stroke-width="1.1"/><rect x="321.55" y="142.96" width="1.1" height="3.5" fill="#3a3a3a"/></svg>
<svg style="left:43.3px;top:157.13px" width="3.2" height="4.6" viewBox="0 0 3.2 4.6"><rect x="0" y="0" width="3.2" height="4.6" fill="rgba(0,0,0,0.085)"/><g fill="rgba(0,0,0,0.06)"><rect x="0" y="1.1" width="3.2" height="0.5"/><rect x="0" y="2.3" width="3.2" height="0.5"/><rect x="0" y="3.5" width="3.2" height="0.5"/></g></svg>
<div class="t" style="left:51.6px;top:157.63px;font-size:5.7px;color:#222;-webkit-text-stroke:0.12px #222">8</div>
<div class="sel" style="left:62.4px;top:154.23px;width:112.19999999999999px;height:10.0px;border-color:#b0b0b0"><div class="v" style="left:1.3px;font-size:6.0px;letter-spacing:0.05px">Bitumen</div><svg style="right:3.4px;top:3px" width="3.6" height="3.2" viewBox="0 0 10 9"><path d="M0 0h10L5 9z" fill="#111"/></svg></div>
<div class="inp" style="left:179.2px;top:154.23px;width:16.80000000000001px;height:10.0px"><div class="v" style="left:1.8px;font-size:6.0px;letter-spacing:0.1px">10</div></div>
<div class="t" style="left:197.6px;top:157.53px;font-size:5.9px;color:#1c1c1c;transform:scaleX(0.905);transform-origin:0 50%;-webkit-text-stroke:0.1px #1c1c1c;">mm</div>
<svg style="left:214.3px;top:153.73px" width="9.5" height="11.4" viewBox="0 0 9.5 11.4"><defs><pattern id="chk9" width="1.6" height="1.6" patternUnits="userSpaceOnUse"><rect width="1.6" height="1.6" fill="#d9d9d9"/><rect width="0.8" height="0.8" fill="#bcbcbc"/><rect x="0.8" y="0.8" width="0.8" height="0.8" fill="#bcbcbc"/></pattern></defs><rect x="0" y="0" width="8.8" height="11.4" fill="url(#chk9)"/><path d="M6.2 4.0h2.8M7.6 2.6v2.8" stroke="#333" stroke-width="1.1"/></svg>
<div class="a" style="left:281.1px;top:156.03px;width:7.8px;height:1.2px;background:#3a3a3a"></div>
<div class="a" style="left:281.1px;top:158.73px;width:7.8px;height:1.2px;background:#3a3a3a"></div>
<div class="a" style="left:281.1px;top:161.43px;width:7.8px;height:1.2px;background:#3a3a3a"></div>
<svg style="left:0;top:0" width="800" height="438" viewBox="0 0 800 438"><path d="M294.1 162.53L294.6 160.63L299.3 155.93L300.9 157.53L296.2 162.23z" fill="#3a3a3a"/><path d="M299.9 155.33L300.5 154.73L301.9 156.13L301.3 156.73z" fill="#3a3a3a"/><rect x="305.7" y="154.33" width="9.3" height="1.5" fill="#c2c2c2"/><rect x="305.7" y="156.73" width="4.6" height="1.4" fill="#c2c2c2"/><rect x="310.3" y="156.73" width="4.7" height="1.4" fill="#dadada"/><path d="M310 158.63H314M312 156.63V160.83" stroke="#3a3a3a" stroke-width="1.3"/><path d="M320.0 156.63A3.5 3.5 0 1 0 324.2 156.63" fill="none" stroke="#3a3a3a" stroke-width="1.1"/><rect x="321.55" y="155.03" width="1.1" height="3.5" fill="#3a3a3a"/></svg>
<svg style="left:43.3px;top:169.20px" width="3.2" height="4.6" viewBox="0 0 3.2 4.6"><rect x="0" y="0" width="3.2" height="4.6" fill="rgba(0,0,0,0.085)"/><g fill="rgba(0,0,0,0.06)"><rect x="0" y="1.1" width="3.2" height="0.5"/><rect x="0" y="2.3" width="3.2" height="0.5"/><rect x="0" y="3.5" width="3.2" height="0.5"/></g></svg>
<div class="t" style="left:51.6px;top:169.70px;font-size:5.7px;color:#222;-webkit-text-stroke:0.12px #222">9</div>
<div class="sel" style="left:62.4px;top:166.3px;width:112.19999999999999px;height:10.0px;border-color:#b0b0b0"><div class="v" style="left:1.3px;font-size:6.0px;letter-spacing:0.05px"></div><svg style="right:3.4px;top:3px" width="3.6" height="3.2" viewBox="0 0 10 9"><path d="M0 0h10L5 9z" fill="#111"/></svg></div>
<div class="inp" style="left:179.2px;top:166.3px;width:16.80000000000001px;height:10.0px"><div class="v" style="left:1.8px;font-size:6.0px;letter-spacing:0.1px"></div></div>
<div class="t" style="left:197.6px;top:169.60px;font-size:5.9px;color:#1c1c1c;transform:scaleX(0.905);transform-origin:0 50%;-webkit-text-stroke:0.1px #1c1c1c;">mm</div>
<svg style="left:306.8px;top:166.70px" width="7.5" height="8.5" viewBox="0 0 15 17"><rect x="1" y="1.5" width="13" height="2" fill="#666"/><rect x="5.5" y="0" width="4" height="2" fill="#666"/><path d="M2.5 4.5h10l-0.8 12h-8.4z" fill="none" stroke="#666" stroke-width="1.4"/><path d="M5.5 6.5v8M7.5 6.5v8M9.5 6.5v8" stroke="#666" stroke-width="1"/></svg>
<div class="t" style="left:43.8px;top:181.67px;font-size:5.9px;color:#1c1c1c;transform:scaleX(0.905);transform-origin:0 50%;-webkit-text-stroke:0.1px #1c1c1c;">Buiten:</div>
<div class="sel" style="left:62.4px;top:178.37px;width:112.19999999999999px;height:10.0px;border-color:#b0b0b0"><div class="v" style="left:1.3px;font-size:6.0px;letter-spacing:0.05px">Directe overgang naar buitenlucht</div><svg style="right:3.4px;top:3px" width="3.6" height="3.2" viewBox="0 0 10 9"><path d="M0 0h10L5 9z" fill="#111"/></svg></div>
<div class="inp" style="left:179.2px;top:178.37px;width:16.80000000000001px;height:10.0px"><div class="v" style="left:1.8px;font-size:6.0px;letter-spacing:0.1px">-5</div></div>
<div class="t" style="left:197.5px;top:181.67px;font-size:5.9px;color:#1c1c1c;transform:scaleX(0.905);transform-origin:0 50%;-webkit-text-stroke:0.1px #1c1c1c;">&deg;C</div>
<div class="inp" style="left:208.2px;top:178.37px;width:16.600000000000023px;height:10.0px"><div class="v" style="left:1.8px;font-size:6.0px;letter-spacing:0.1px">80</div></div>
<div class="t" style="left:226.8px;top:181.67px;font-size:5.9px;color:#1c1c1c;transform:scaleX(0.905);transform-origin:0 50%;-webkit-text-stroke:0.1px #1c1c1c;">% Luchtvochtigheid</div>
<div class="a" style="left:278.2px;top:178.17px;width:23.2px;height:10.4px;background:linear-gradient(#f0f0f0,#dcdcdc);border:0.8px solid #b5b5b5;border-radius:1.5px"></div>
<div class="t" style="left:281.2px;top:181.67px;font-size:5.9px;color:#1c1c1c;transform:scaleX(0.905);transform-origin:0 50%;-webkit-text-stroke:0.1px #1c1c1c;">Rse...</div>
<svg style="left:0;top:0" width="800" height="438" viewBox="0 0 800 438"><defs><clipPath id="cI"><rect x="383.8" y="118.5" width="300.40000000000003" height="58.400000000000006"/></clipPath><clipPath id="cS1"><rect x="414.1" y="118.5" width="22.5" height="58.400000000000006"/></clipPath><clipPath id="cS2"><rect x="631.4" y="118.5" width="22.5" height="58.400000000000006"/></clipPath></defs><rect x="382.8" y="108.0" width="302.40000000000003" height="83.4" fill="#fcfcfc"/><rect x="383.8" y="109.2" width="300.40000000000003" height="3.6499999999999915" fill="#fafafa"/><rect x="383.70" y="109.2" width="13.5" height="3.65" fill="#000"/><rect x="411.01" y="109.2" width="13.5" height="3.65" fill="#000"/><rect x="438.32" y="109.2" width="13.5" height="3.65" fill="#000"/><rect x="465.63" y="109.2" width="13.5" height="3.65" fill="#000"/><rect x="492.94" y="109.2" width="13.5" height="3.65" fill="#000"/><rect x="520.25" y="109.2" width="13.5" height="3.65" fill="#000"/><rect x="547.56" y="109.2" width="13.5" height="3.65" fill="#000"/><rect x="574.87" y="109.2" width="13.5" height="3.65" fill="#000"/><rect x="602.18" y="109.2" width="13.5" height="3.65" fill="#000"/><rect x="629.49" y="109.2" width="13.5" height="3.65" fill="#000"/><rect x="656.80" y="109.2" width="13.5" height="3.65" fill="#000"/><rect x="383.8" y="112.85" width="300.40000000000003" height="5.65" fill="#e0ab80"/><rect x="385.90" y="112.85" width="0.6" height="5.65" fill="#c79a72"/><rect x="389.90" y="112.85" width="0.6" height="5.65" fill="#c79a72"/><rect x="393.90" y="112.85" width="0.6" height="5.65" fill="#c79a72"/><rect x="397.90" y="112.85" width="0.6" height="5.65" fill="#c79a72"/><rect x="401.90" y="112.85" width="0.6" height="5.65" fill="#c79a72"/><rect x="405.90" y="112.85" width="0.6" height="5.65" fill="#c79a72"/><rect x="409.90" y="112.85" width="0.6" height="5.65" fill="#c79a72"/><rect x="413.90" y="112.85" width="0.6" height="5.65" fill="#c79a72"/><rect x="417.90" y="112.85" width="0.6" height="5.65" fill="#c79a72"/><rect x="421.90" y="112.85" width="0.6" height="5.65" fill="#c79a72"/><rect x="425.90" y="112.85" width="0.6" height="5.65" fill="#c79a72"/><rect x="429.90" y="112.85" width="0.6" height="5.65" fill="#c79a72"/><rect x="433.90" y="112.85" width="0.6" height="5.65" fill="#c79a72"/><rect x="437.90" y="112.85" width="0.6" height="5.65" fill="#c79a72"/><rect x="441.90" y="112.85" width="0.6" height="5.65" fill="#c79a72"/><rect x="445.90" y="112.85" width="0.6" height="5.65" fill="#c79a72"/><rect x="449.90" y="112.85" width="0.6" height="5.65" fill="#c79a72"/><rect x="453.90" y="112.85" width="0.6" height="5.65" fill="#c79a72"/><rect x="457.90" y="112.85" width="0.6" height="5.65" fill="#c79a72"/><rect x="461.90" y="112.85" width="0.6" height="5.65" fill="#c79a72"/><rect x="465.90" y="112.85" width="0.6" height="5.65" fill="#c79a72"/><rect x="469.90" y="112.85" width="0.6" height="5.65" fill="#c79a72"/><rect x="473.90" y="112.85" width="0.6" height="5.65" fill="#c79a72"/><rect x="477.90" y="112.85" width="0.6" height="5.65" fill="#c79a72"/><rect x="481.90" y="112.85" width="0.6" height="5.65" fill="#c79a72"/><rect x="485.90" y="112.85" width="0.6" height="5.65" fill="#c79a72"/><rect x="489.90" y="112.85" width="0.6" height="5.65" fill="#c79a72"/><rect x="493.90" y="112.85" width="0.6" height="5.65" fill="#c79a72"/><rect x="497.90" y="112.85" width="0.6" height="5.65" fill="#c79a72"/><rect x="501.90" y="112.85" width="0.6" height="5.65" fill="#c79a72"/><rect x="505.90" y="112.85" width="0.6" height="5.65" fill="#c79a72"/><rect x="509.90" y="112.85" width="0.6" height="5.65" fill="#c79a72"/><rect x="513.90" y="112.85" width="0.6" height="5.65" fill="#c79a72"/><rect x="517.90" y="112.85" width="0.6" height="5.65" fill="#c79a72"/><rect x="521.90" y="112.85" width="0.6" height="5.65" fill="#c79a72"/><rect x="525.90" y="112.85" width="0.6" height="5.65" fill="#c79a72"/><rect x="529.90" y="112.85" width="0.6" height="5.65" fill="#c79a72"/><rect x="533.90" y="112.85" width="0.6" height="5.65" fill="#c79a72"/><rect x="537.90" y="112.85" width="0.6" height="5.65" fill="#c79a72"/><rect x="541.90" y="112.85" width="0.6" height="5.65" fill="#c79a72"/><rect x="545.90" y="112.85" width="0.6" height="5.65" fill="#c79a72"/><rect x="549.90" y="112.85" width="0.6" height="5.65" fill="#c79a72"/><rect x="553.90" y="112.85" width="0.6" height="5.65" fill="#c79a72"/><rect x="557.90" y="112.85" width="0.6" height="5.65" fill="#c79a72"/><rect x="561.90" y="112.85" width="0.6" height="5.65" fill="#c79a72"/><rect x="565.90" y="112.85" width="0.6" height="5.65" fill="#c79a72"/><rect x="569.90" y="112.85" width="0.6" height="5.65" fill="#c79a72"/><rect x="573.90" y="112.85" width="0.6" height="5.65" fill="#c79a72"/><rect x="577.90" y="112.85" width="0.6" height="5.65" fill="#c79a72"/><rect x="581.90" y="112.85" width="0.6" height="5.65" fill="#c79a72"/><rect x="585.90" y="112.85" width="0.6" height="5.65" fill="#c79a72"/><rect x="589.90" y="112.85" width="0.6" height="5.65" fill="#c79a72"/><rect x="593.90" y="112.85" width="0.6" height="5.65" fill="#c79a72"/><rect x="597.90" y="112.85" width="0.6" height="5.65" fill="#c79a72"/><rect x="601.90" y="112.85" width="0.6" height="5.65" fill="#c79a72"/><rect x="605.90" y="112.85" width="0.6" height="5.65" fill="#c79a72"/><rect x="609.90" y="112.85" width="0.6" height="5.65" fill="#c79a72"/><rect x="613.90" y="112.85" width="0.6" height="5.65" fill="#c79a72"/><rect x="617.90" y="112.85" width="0.6" height="5.65" fill="#c79a72"/><rect x="621.90" y="112.85" width="0.6" height="5.65" fill="#c79a72"/><rect x="625.90" y="112.85" width="0.6" height="5.65" fill="#c79a72"/><rect x="629.90" y="112.85" width="0.6" height="5.65" fill="#c79a72"/><rect x="633.90" y="112.85" width="0.6" height="5.65" fill="#c79a72"/><rect x="637.90" y="112.85" width="0.6" height="5.65" fill="#c79a72"/><rect x="641.90" y="112.85" width="0.6" height="5.65" fill="#c79a72"/><rect x="645.90" y="112.85" width="0.6" height="5.65" fill="#c79a72"/><rect x="649.90" y="112.85" width="0.6" height="5.65" fill="#c79a72"/><rect x="653.90" y="112.85" width="0.6" height="5.65" fill="#c79a72"/><rect x="657.90" y="112.85" width="0.6" height="5.65" fill="#c79a72"/><rect x="661.90" y="112.85" width="0.6" height="5.65" fill="#c79a72"/><rect x="665.90" y="112.85" width="0.6" height="5.65" fill="#c79a72"/><rect x="669.90" y="112.85" width="0.6" height="5.65" fill="#c79a72"/><rect x="673.90" y="112.85" width="0.6" height="5.65" fill="#c79a72"/><rect x="677.90" y="112.85" width="0.6" height="5.65" fill="#c79a72"/><rect x="681.90" y="112.85" width="0.6" height="5.65" fill="#c79a72"/><rect x="383.8" y="118.0" width="300.40000000000003" height="0.5" fill="#c9a07a"/><rect x="383.8" y="118.5" width="300.40000000000003" height="58.40" fill="#ffff99"/><g clip-path="url(#cI)"><path d="M334.90 128.80A9.9 9.9 0 0 1 354.70 128.80M344.80 166.50A9.9 9.9 0 0 0 364.60 166.50M344.80 166.50L354.70 128.80L364.60 166.50M354.70 128.80A9.9 9.9 0 0 1 374.50 128.80M364.60 166.50A9.9 9.9 0 0 0 384.40 166.50M364.60 166.50L374.50 128.80L384.40 166.50M374.50 128.80A9.9 9.9 0 0 1 394.30 128.80M384.40 166.50A9.9 9.9 0 0 0 404.20 166.50M384.40 166.50L394.30 128.80L404.20 166.50M394.30 128.80A9.9 9.9 0 0 1 414.10 128.80M404.20 166.50A9.9 9.9 0 0 0 424.00 166.50M404.20 166.50L414.10 128.80L424.00 166.50M414.10 128.80A9.9 9.9 0 0 1 433.90 128.80M424.00 166.50A9.9 9.9 0 0 0 443.80 166.50M424.00 166.50L433.90 128.80L443.80 166.50M433.90 128.80A9.9 9.9 0 0 1 453.70 128.80M443.80 166.50A9.9 9.9 0 0 0 463.60 166.50M443.80 166.50L453.70 128.80L463.60 166.50M453.70 128.80A9.9 9.9 0 0 1 473.50 128.80M463.60 166.50A9.9 9.9 0 0 0 483.40 166.50M463.60 166.50L473.50 128.80L483.40 166.50M473.50 128.80A9.9 9.9 0 0 1 493.30 128.80M483.40 166.50A9.9 9.9 0 0 0 503.20 166.50M483.40 166.50L493.30 128.80L503.20 166.50M493.30 128.80A9.9 9.9 0 0 1 513.10 128.80M503.20 166.50A9.9 9.9 0 0 0 523.00 166.50M503.20 166.50L513.10 128.80L523.00 166.50M513.10 128.80A9.9 9.9 0 0 1 532.90 128.80M523.00 166.50A9.9 9.9 0 0 0 542.80 166.50M523.00 166.50L532.90 128.80L542.80 166.50M532.90 128.80A9.9 9.9 0 0 1 552.70 128.80M542.80 166.50A9.9 9.9 0 0 0 562.60 166.50M542.80 166.50L552.70 128.80L562.60 166.50M552.70 128.80A9.9 9.9 0 0 1 572.50 128.80M562.60 166.50A9.9 9.9 0 0 0 582.40 166.50M562.60 166.50L572.50 128.80L582.40 166.50M572.50 128.80A9.9 9.9 0 0 1 592.30 128.80M582.40 166.50A9.9 9.9 0 0 0 602.20 166.50M582.40 166.50L592.30 128.80L602.20 166.50M592.30 128.80A9.9 9.9 0 0 1 612.10 128.80M602.20 166.50A9.9 9.9 0 0 0 622.00 166.50M602.20 166.50L612.10 128.80L622.00 166.50M612.10 128.80A9.9 9.9 0 0 1 631.90 128.80M622.00 166.50A9.9 9.9 0 0 0 641.80 166.50M622.00 166.50L631.90 128.80L641.80 166.50M631.90 128.80A9.9 9.9 0 0 1 651.70 128.80M641.80 166.50A9.9 9.9 0 0 0 661.60 166.50M641.80 166.50L651.70 128.80L661.60 166.50M651.70 128.80A9.9 9.9 0 0 1 671.50 128.80M661.60 166.50A9.9 9.9 0 0 0 681.40 166.50M661.60 166.50L671.50 128.80L681.40 166.50M671.50 128.80A9.9 9.9 0 0 1 691.30 128.80M681.40 166.50A9.9 9.9 0 0 0 701.20 166.50M681.40 166.50L691.30 128.80L701.20 166.50M691.30 128.80A9.9 9.9 0 0 1 711.10 128.80M701.20 166.50A9.9 9.9 0 0 0 721.00 166.50M701.20 166.50L711.10 128.80L721.00 166.50" fill="none" stroke="#a9a468" stroke-width="0.95"/></g><rect x="414.1" y="118.5" width="22.5" height="58.40" fill="#d5ab84"/><g clip-path="url(#cS1)" fill="none" stroke="#a9835e" stroke-width="0.65"><circle cx="414.1" cy="147.70" r="0.90"/><circle cx="414.1" cy="147.70" r="4.45"/><circle cx="414.1" cy="147.70" r="8.00"/><circle cx="414.1" cy="147.70" r="11.55"/><circle cx="414.1" cy="147.70" r="15.10"/><circle cx="414.1" cy="147.70" r="18.65"/><circle cx="414.1" cy="147.70" r="22.20"/><circle cx="414.1" cy="147.70" r="25.75"/><circle cx="414.1" cy="147.70" r="29.30"/><circle cx="414.1" cy="147.70" r="32.85"/></g><rect x="414.1" y="118.5" width="22.5" height="58.40" fill="none" stroke="#b58a62" stroke-width="0.4"/><rect x="631.4" y="118.5" width="22.5" height="58.40" fill="#d5ab84"/><g clip-path="url(#cS2)" fill="none" stroke="#a9835e" stroke-width="0.65"><circle cx="631.4" cy="147.70" r="0.90"/><circle cx="631.4" cy="147.70" r="4.45"/><circle cx="631.4" cy="147.70" r="8.00"/><circle cx="631.4" cy="147.70" r="11.55"/><circle cx="631.4" cy="147.70" r="15.10"/><circle cx="631.4" cy="147.70" r="18.65"/><circle cx="631.4" cy="147.70" r="22.20"/><circle cx="631.4" cy="147.70" r="25.75"/><circle cx="631.4" cy="147.70" r="29.30"/><circle cx="631.4" cy="147.70" r="32.85"/></g><rect x="631.4" y="118.5" width="22.5" height="58.40" fill="none" stroke="#b58a62" stroke-width="0.4"/><rect x="383.8" y="176.9" width="300.40000000000003" height="7.30" fill="#fafafa"/><clipPath id="cs0"><rect x="421.10" y="176.9" width="7.7" height="7.70"/></clipPath><rect x="421.10" y="176.9" width="7.7" height="7.90" fill="#d5ab84"/><g clip-path="url(#cs0)" fill="none" stroke="#b08660" stroke-width="0.6"><circle cx="421.10" cy="180.55" r="2.60"/><circle cx="421.10" cy="180.55" r="5.20"/><circle cx="421.10" cy="180.55" r="7.80"/><circle cx="421.10" cy="180.55" r="10.40"/></g><clipPath id="cs1"><rect x="493.60" y="176.9" width="7.7" height="7.70"/></clipPath><rect x="493.60" y="176.9" width="7.7" height="7.90" fill="#d5ab84"/><g clip-path="url(#cs1)" fill="none" stroke="#b08660" stroke-width="0.6"><circle cx="493.60" cy="180.55" r="2.60"/><circle cx="493.60" cy="180.55" r="5.20"/><circle cx="493.60" cy="180.55" r="7.80"/><circle cx="493.60" cy="180.55" r="10.40"/></g><clipPath id="cs2"><rect x="566.10" y="176.9" width="7.7" height="7.70"/></clipPath><rect x="566.10" y="176.9" width="7.7" height="7.90" fill="#d5ab84"/><g clip-path="url(#cs2)" fill="none" stroke="#b08660" stroke-width="0.6"><circle cx="566.10" cy="180.55" r="2.60"/><circle cx="566.10" cy="180.55" r="5.20"/><circle cx="566.10" cy="180.55" r="7.80"/><circle cx="566.10" cy="180.55" r="10.40"/></g><clipPath id="cs3"><rect x="638.60" y="176.9" width="7.7" height="7.70"/></clipPath><rect x="638.60" y="176.9" width="7.7" height="7.90" fill="#d5ab84"/><g clip-path="url(#cs3)" fill="none" stroke="#b08660" stroke-width="0.6"><circle cx="638.60" cy="180.55" r="2.60"/><circle cx="638.60" cy="180.55" r="5.20"/><circle cx="638.60" cy="180.55" r="7.80"/><circle cx="638.60" cy="180.55" r="10.40"/></g><rect x="383.8" y="184.2" width="300.40000000000003" height="1.70" fill="#d8d8d8"/><rect x="383.70" y="184.2" width="13.5" height="1.70" fill="#555"/><rect x="411.01" y="184.2" width="13.5" height="1.70" fill="#555"/><rect x="438.32" y="184.2" width="13.5" height="1.70" fill="#555"/><rect x="465.63" y="184.2" width="13.5" height="1.70" fill="#555"/><rect x="492.94" y="184.2" width="13.5" height="1.70" fill="#555"/><rect x="520.25" y="184.2" width="13.5" height="1.70" fill="#555"/><rect x="547.56" y="184.2" width="13.5" height="1.70" fill="#555"/><rect x="574.87" y="184.2" width="13.5" height="1.70" fill="#555"/><rect x="602.18" y="184.2" width="13.5" height="1.70" fill="#555"/><rect x="629.49" y="184.2" width="13.5" height="1.70" fill="#555"/><rect x="656.80" y="184.2" width="13.5" height="1.70" fill="#555"/><rect x="383.8" y="185.9" width="300.40000000000003" height="2.30" fill="#d9d9d9"/><rect x="383.8" y="188.2" width="300.40000000000003" height="2.20" fill="#a9a9a9"/><rect x="455.28" y="188.35" width="0.8" height="0.5" fill="#999"/><rect x="494.93" y="188.62" width="0.8" height="0.5" fill="#999"/><rect x="571.77" y="186.19" width="0.8" height="0.5" fill="#999"/><rect x="387.76" y="189.67" width="0.8" height="0.5" fill="#999"/><rect x="461.71" y="186.95" width="0.8" height="0.5" fill="#999"/><rect x="682.89" y="188.02" width="0.8" height="0.5" fill="#999"/><rect x="635.07" y="188.04" width="0.8" height="0.5" fill="#999"/><rect x="575.78" y="186.58" width="0.8" height="0.5" fill="#999"/><rect x="574.51" y="189.81" width="0.8" height="0.5" fill="#999"/><rect x="540.96" y="189.24" width="0.8" height="0.5" fill="#999"/><rect x="585.49" y="186.19" width="0.8" height="0.5" fill="#999"/><rect x="611.57" y="188.56" width="0.8" height="0.5" fill="#999"/><rect x="474.30" y="186.04" width="0.8" height="0.5" fill="#999"/><rect x="643.80" y="188.03" width="0.8" height="0.5" fill="#999"/><rect x="599.73" y="189.85" width="0.8" height="0.5" fill="#999"/><rect x="598.32" y="190.04" width="0.8" height="0.5" fill="#999"/><rect x="502.45" y="189.50" width="0.8" height="0.5" fill="#999"/><rect x="517.36" y="190.11" width="0.8" height="0.5" fill="#999"/><rect x="647.81" y="186.34" width="0.8" height="0.5" fill="#999"/><rect x="424.65" y="186.88" width="0.8" height="0.5" fill="#999"/><rect x="673.83" y="187.86" width="0.8" height="0.5" fill="#999"/><rect x="572.05" y="187.25" width="0.8" height="0.5" fill="#999"/><rect x="536.18" y="187.64" width="0.8" height="0.5" fill="#999"/><rect x="489.21" y="188.53" width="0.8" height="0.5" fill="#999"/><rect x="559.31" y="189.97" width="0.8" height="0.5" fill="#999"/><rect x="588.67" y="190.08" width="0.8" height="0.5" fill="#999"/><rect x="641.06" y="190.36" width="0.8" height="0.5" fill="#999"/><rect x="585.45" y="186.63" width="0.8" height="0.5" fill="#999"/><rect x="642.34" y="190.24" width="0.8" height="0.5" fill="#999"/><rect x="655.57" y="188.46" width="0.8" height="0.5" fill="#999"/><rect x="598.23" y="186.85" width="0.8" height="0.5" fill="#999"/><rect x="633.62" y="188.48" width="0.8" height="0.5" fill="#999"/><rect x="469.40" y="186.19" width="0.8" height="0.5" fill="#999"/><rect x="640.32" y="190.35" width="0.8" height="0.5" fill="#999"/><rect x="410.39" y="189.50" width="0.8" height="0.5" fill="#999"/><rect x="507.10" y="186.58" width="0.8" height="0.5" fill="#999"/><rect x="472.08" y="189.36" width="0.8" height="0.5" fill="#999"/><rect x="645.98" y="186.10" width="0.8" height="0.5" fill="#999"/><rect x="568.41" y="186.10" width="0.8" height="0.5" fill="#999"/><rect x="599.62" y="187.39" width="0.8" height="0.5" fill="#999"/><rect x="648.42" y="190.31" width="0.8" height="0.5" fill="#999"/><rect x="535.63" y="190.39" width="0.8" height="0.5" fill="#999"/><rect x="476.82" y="186.25" width="0.8" height="0.5" fill="#999"/><rect x="563.97" y="186.04" width="0.8" height="0.5" fill="#999"/><rect x="443.09" y="187.74" width="0.8" height="0.5" fill="#999"/><rect x="567.18" y="186.60" width="0.8" height="0.5" fill="#999"/><rect x="396.55" y="189.81" width="0.8" height="0.5" fill="#999"/><rect x="478.07" y="190.21" width="0.8" height="0.5" fill="#999"/><rect x="653.16" y="187.60" width="0.8" height="0.5" fill="#999"/><rect x="522.11" y="188.24" width="0.8" height="0.5" fill="#999"/><rect x="577.22" y="188.58" width="0.8" height="0.5" fill="#999"/><rect x="551.80" y="188.69" width="0.8" height="0.5" fill="#999"/><rect x="666.36" y="188.18" width="0.8" height="0.5" fill="#999"/><rect x="513.33" y="189.14" width="0.8" height="0.5" fill="#999"/><rect x="455.19" y="187.25" width="0.8" height="0.5" fill="#999"/><rect x="677.53" y="188.25" width="0.8" height="0.5" fill="#999"/><rect x="548.55" y="185.95" width="0.8" height="0.5" fill="#999"/><rect x="508.53" y="188.51" width="0.8" height="0.5" fill="#999"/><rect x="389.82" y="188.67" width="0.8" height="0.5" fill="#999"/><rect x="573.71" y="186.17" width="0.8" height="0.5" fill="#999"/><rect x="681.8" y="110.20" width="2.3" height="2.65" fill="#7a7a7a"/><rect x="681.8" y="115.05" width="2.3" height="2.40" fill="#7a7a7a"/><rect x="681.8" y="184.00" width="2.3" height="1.70" fill="#7a7a7a"/><rect x="681.8" y="186.20" width="2.3" height="2.00" fill="#7a7a7a"/><rect x="681.8" y="188.20" width="2.3" height="2.20" fill="#7a7a7a"/><rect x="366.2" y="109.2" width="1.4" height="81.20" fill="#c8c8c8"/><rect x="365" y="109.15" width="3.8" height="0.7" fill="#9a9a9a"/><rect x="365" y="111.85" width="3.8" height="0.7" fill="#9a9a9a"/><rect x="365" y="118.05" width="3.8" height="0.7" fill="#9a9a9a"/><rect x="365" y="176.65" width="3.8" height="0.7" fill="#9a9a9a"/><rect x="365" y="184.55" width="3.8" height="0.7" fill="#9a9a9a"/><rect x="365" y="187.95" width="3.8" height="0.7" fill="#9a9a9a"/><rect x="365" y="190.05" width="3.8" height="0.7" fill="#9a9a9a"/><rect x="493.5" y="202.7" width="72.9" height="0.7" fill="#9a9a9a"/><rect x="493.15" y="201" width="0.7" height="4" fill="#9a9a9a"/><rect x="501.15" y="201" width="0.7" height="4" fill="#9a9a9a"/><rect x="566.05" y="201" width="0.7" height="4" fill="#9a9a9a"/><rect x="413.75" y="211" width="217.65" height="0.7" fill="#9a9a9a"/><rect x="413.40" y="209.3" width="0.7" height="4" fill="#9a9a9a"/><rect x="436.15" y="209.3" width="0.7" height="4" fill="#9a9a9a"/><rect x="631.05" y="209.3" width="0.7" height="4" fill="#9a9a9a"/><text x="369.6" y="117.9" font-size="5.8" text-anchor="start" font-family="Liberation Sans" fill="#7a7a7a" >18</text><text x="369.6" y="149.8" font-size="5.8" text-anchor="start" font-family="Liberation Sans" fill="#7a7a7a" >180</text><text x="369.2" y="182.9" font-size="5.8" text-anchor="start" font-family="Liberation Sans" fill="#7a7a7a" >24</text><text x="0" y="0" font-size="5.8" text-anchor="middle" font-family="Liberation Sans" fill="#7a7a7a" transform="translate(363.8 150) rotate(-90)">250,5</text><text x="497.5" y="209.6" font-size="5.8" text-anchor="middle" font-family="Liberation Sans" fill="#7a7a7a" >24</text><text x="534" y="209.6" font-size="5.8" text-anchor="middle" font-family="Liberation Sans" fill="#7a7a7a" >200</text><text x="425" y="217.8" font-size="5.8" text-anchor="middle" font-family="Liberation Sans" fill="#7a7a7a" >70</text><text x="534" y="217.8" font-size="5.8" text-anchor="middle" font-family="Liberation Sans" fill="#7a7a7a" >600</text><text x="534" y="106.8" font-size="6.0" text-anchor="middle" font-family="Liberation Sans" fill="#8c8c8c" >Buiten</text><text x="534" y="197.8" font-size="6.0" text-anchor="middle" font-family="Liberation Sans" fill="#8c8c8c" >Binnen</text><text x="670.5" y="197.6" font-size="6.3" text-anchor="middle" font-family="Liberation Sans" fill="#c4c4c4" >ubakus.de</text><path d="M455.50 110.50C454.90 111.60 453.80 112.50 453.80 113.40A1.70 1.70 0 0 0 457.20 113.40C457.20 112.50 456.10 111.60 455.50 110.50z" fill="#2f73de" stroke="#fff" stroke-width="0.5"/><path d="M473.00 109.00C472.40 110.10 471.30 111.00 471.30 111.90A1.70 1.70 0 0 0 474.70 111.90C474.70 111.00 473.60 110.10 473.00 109.00z" fill="#2f73de" stroke="#fff" stroke-width="0.5"/><path d="M488.20 110.50C487.60 111.60 486.50 112.50 486.50 113.40A1.70 1.70 0 0 0 489.90 113.40C489.90 112.50 488.80 111.60 488.20 110.50z" fill="#2f73de" stroke="#fff" stroke-width="0.5"/><path d="M507.70 108.70C507.10 109.80 506.00 110.70 506.00 111.60A1.70 1.70 0 0 0 509.40 111.60C509.40 110.70 508.30 109.80 507.70 108.70z" fill="#2f73de" stroke="#fff" stroke-width="0.5"/><path d="M521.20 110.70C520.60 111.80 519.50 112.70 519.50 113.60A1.70 1.70 0 0 0 522.90 113.60C522.90 112.70 521.80 111.80 521.20 110.70z" fill="#2f73de" stroke="#fff" stroke-width="0.5"/><path d="M541.80 109.70C541.20 110.80 540.10 111.70 540.10 112.60A1.70 1.70 0 0 0 543.50 112.60C543.50 111.70 542.40 110.80 541.80 109.70z" fill="#2f73de" stroke="#fff" stroke-width="0.5"/><path d="M552.00 108.20C551.40 109.30 550.30 110.20 550.30 111.10A1.70 1.70 0 0 0 553.70 111.10C553.70 110.20 552.60 109.30 552.00 108.20z" fill="#2f73de" stroke="#fff" stroke-width="0.5"/><path d="M571.80 108.70C571.20 109.80 570.10 110.70 570.10 111.60A1.70 1.70 0 0 0 573.50 111.60C573.50 110.70 572.40 109.80 571.80 108.70z" fill="#2f73de" stroke="#fff" stroke-width="0.5"/><path d="M583.70 109.70C583.10 110.80 582.00 111.70 582.00 112.60A1.70 1.70 0 0 0 585.40 112.60C585.40 111.70 584.30 110.80 583.70 109.70z" fill="#2f73de" stroke="#fff" stroke-width="0.5"/><path d="M605.50 108.70C604.90 109.80 603.80 110.70 603.80 111.60A1.70 1.70 0 0 0 607.20 111.60C607.20 110.70 606.10 109.80 605.50 108.70z" fill="#2f73de" stroke="#fff" stroke-width="0.5"/><path d="M617.20 110.70C616.60 111.80 615.50 112.70 615.50 113.60A1.70 1.70 0 0 0 618.90 113.60C618.90 112.70 617.80 111.80 617.20 110.70z" fill="#2f73de" stroke="#fff" stroke-width="0.5"/><circle cx="550.75" cy="147.7" r="4.05" fill="#fff" stroke="#444" stroke-width="0.6"/><text x="550.75" y="149.75" font-size="5.9" text-anchor="middle" font-family="Liberation Sans" fill="#1a1a1a" text-rendering="geometricPrecision">5</text><circle cx="567.2" cy="110.7" r="4.05" fill="#fff" stroke="#444" stroke-width="0.6"/><text x="567.2" y="112.75" font-size="5.9" text-anchor="middle" font-family="Liberation Sans" fill="#1a1a1a" text-rendering="geometricPrecision">8</text><circle cx="559.0" cy="112.6" r="4.05" fill="#fff" stroke="#444" stroke-width="0.6"/><text x="559.0" y="114.65" font-size="5.9" text-anchor="middle" font-family="Liberation Sans" fill="#1a1a1a" text-rendering="geometricPrecision">7</text><circle cx="550.75" cy="115.75" r="4.05" fill="#fff" stroke="#444" stroke-width="0.6"/><text x="550.75" y="117.80" font-size="5.9" text-anchor="middle" font-family="Liberation Sans" fill="#1a1a1a" text-rendering="geometricPrecision">6</text><circle cx="551.0" cy="181.0" r="4.05" fill="#fff" stroke="#444" stroke-width="0.6"/><text x="551.0" y="183.05" font-size="5.9" text-anchor="middle" font-family="Liberation Sans" fill="#1a1a1a" text-rendering="geometricPrecision">4</text><circle cx="542.4" cy="184.4" r="4.05" fill="#fff" stroke="#444" stroke-width="0.6"/><text x="542.4" y="186.45" font-size="5.9" text-anchor="middle" font-family="Liberation Sans" fill="#1a1a1a" text-rendering="geometricPrecision">3</text><circle cx="533.5" cy="186.8" r="4.05" fill="#fff" stroke="#444" stroke-width="0.6"/><text x="533.5" y="188.85" font-size="5.9" text-anchor="middle" font-family="Liberation Sans" fill="#1a1a1a" text-rendering="geometricPrecision">2</text><circle cx="525.8" cy="189.9" r="4.05" fill="#fff" stroke="#444" stroke-width="0.6"/><text x="525.8" y="191.95" font-size="5.9" text-anchor="middle" font-family="Liberation Sans" fill="#1a1a1a" text-rendering="geometricPrecision">1</text><polyline points="684.2,110.8 692.6,110.8 702.6,103.5" fill="none" stroke="#999" stroke-width="0.65"/><polyline points="684.2,112.6 702.6,113.4" fill="none" stroke="#999" stroke-width="0.65"/><polyline points="684.2,116.0 692.6,116.0 702.6,123.6" fill="none" stroke="#999" stroke-width="0.65"/><polyline points="651.2,137.3 703,137.3" fill="none" stroke="#999" stroke-width="0.65"/><polyline points="681.9,147.0 703,147.0" fill="none" stroke="#999" stroke-width="0.65"/><polyline points="647,179.0 692.6,179.0 702.6,157.6" fill="none" stroke="#999" stroke-width="0.65"/><polyline points="692.6,179.0 702.6,167.7" fill="none" stroke="#999" stroke-width="0.65"/><polyline points="684.2,184.8 692.6,184.8 702.6,177.6" fill="none" stroke="#999" stroke-width="0.65"/><polyline points="684.2,187.2 702.6,187.3" fill="none" stroke="#999" stroke-width="0.65"/><polyline points="684.2,189.6 692.6,189.6 702.6,197.3" fill="none" stroke="#999" stroke-width="0.65"/><text x="705" y="105.4" font-size="5.95" text-anchor="start" font-family="Liberation Sans" fill="#3a3a3a" >Bitumen (10mm)</text><text x="705" y="115.4" font-size="5.95" text-anchor="start" font-family="Liberation Sans" fill="#3a3a3a" >Waterkerende dampdoorlatende folie</text><text x="705" y="125.60000000000001" font-size="5.95" text-anchor="start" font-family="Liberation Sans" fill="#3a3a3a" >OSB/3 (18mm)</text><text x="705" y="139.4" font-size="5.95" text-anchor="start" font-family="Liberation Sans" fill="#3a3a3a" >Spar (180x70mm&#178;)</text><text x="705" y="149.3" font-size="5.95" text-anchor="start" font-family="Liberation Sans" fill="#3a3a3a" >PAVATEX PAVAFLEX (180mm)</text><text x="705" y="159.5" font-size="5.95" text-anchor="start" font-family="Liberation Sans" fill="#3a3a3a" >Spar (24x24mm&#178;)</text><text x="705" y="169.70000000000002" font-size="5.95" text-anchor="start" font-family="Liberation Sans" fill="#3a3a3a" >Luchtspouw (niet geventileerd) (24mm)</text><text x="705" y="179.6" font-size="5.95" text-anchor="start" font-family="Liberation Sans" fill="#3a3a3a" >Dampfsperre (0,5mm)</text><text x="705" y="189.4" font-size="5.95" text-anchor="start" font-family="Liberation Sans" fill="#3a3a3a" >Gipskartonplaat (12,5mm)</text><text x="705" y="199.4" font-size="5.95" text-anchor="start" font-family="Liberation Sans" fill="#3a3a3a" >Kalkputz (5mm)</text></svg>
<div class="t" style="left:351.7px;top:366.45px;font-size:5.9px;color:#a23b2c;transform:scaleX(0.905);transform-origin:0 50%;-webkit-text-stroke:0.1px #a23b2c;">Commercieel gebruik tegen betaling.</div>
<div class="t" style="left:442px;top:366.45px;font-size:5.9px;color:#62913a;transform:scaleX(0.905);transform-origin:0 50%;-webkit-text-stroke:0.1px #62913a;">Verdere informatie</div>
<div class="a" style="left:38px;top:373px;width:762px;height:1px;background:#fff"></div>
<div class="a" style="left:0;top:374px;width:800px;height:64px;background:linear-gradient(#545454,#454545);border-top:1.6px solid #323232;border-bottom:1.6px solid #0a0a0a"></div>
<svg style="left:4px;top:381px" width="5.2" height="4" viewBox="0 0 10 8"><path d="M0 0h10L5 8z" fill="#f0f0f0"/></svg>
<svg style="left:0;top:0" width="800" height="438" viewBox="0 0 800 438"><g font-family="Liberation Sans" fill="#f0f0f0"><text x="194.0" y="387.7" font-size="7.9">R</text><text x="199.4" y="390.0" font-size="7.0">C</text><text x="205.2" y="387.2" font-size="7.2">=</text><text x="211.6" y="387.9" font-size="10.7">4,126</text><text x="241.0" y="387.4" font-size="5.3">m&#178;K/W</text></g></svg>
<svg style="left:0;top:0" width="800" height="438" viewBox="0 0 800 438"><path d="M289.6 388.0L285.7 384.1" stroke="#e0e0e0" stroke-width="1.4" stroke-linecap="round"/><path d="M282.6 382.0A2.1 2.1 0 1 0 285.0 380.6" fill="none" stroke="#e0e0e0" stroke-width="1.3"/></svg>
<div class="a" style="left:194px;top:394.10px;width:96px;height:5.2px;background:#484848"></div>
<div class="a" style="left:289.40px;top:393.90px;width:0.6px;height:5.4px;background:#8a8a8a"></div>
<div class="a" style="left:194px;top:394.60px;width:23px;height:2.6px;background:#d40000"></div>
<div class="a" style="left:194px;top:397.40px;width:95.40px;height:1.4px;background:linear-gradient(90deg,#6b9a47 0,#6b9a47 16%,#b93530 17%,#b93530 100%)"></div>
<div class="t" style="left:194px;top:403.15px;font-size:5.9px;color:#e4e4e4;transform:scaleX(0.905);transform-origin:0 50%;-webkit-text-stroke:0.1px #e4e4e4;">Bouwbesluit 2015: Rc&gt;6,0*</div>
<div class="a" style="left:262px;top:402px;width:6px;height:6px;background:#e8e8e8"><svg style="left:1.2px;top:1.8px" width="3.6" height="2.6" viewBox="0 0 10 7"><path d="M0 0h10L5 7z" fill="#333"/></svg></div>
<div class="t" style="left:194px;top:414.75px;font-size:5.9px;color:#e4e4e4;transform:scaleX(0.905);transform-origin:0 50%;-webkit-text-stroke:0.1px #e4e4e4;">Bijdrage aan het broeikaseffect:</div>
<div class="a" style="left:194px;top:420.20px;width:96px;height:5.2px;background:#484848"></div>
<div class="a" style="left:289.40px;top:420.00px;width:0.6px;height:5.4px;background:#8a8a8a"></div>
<div class="a" style="left:194px;top:420.70px;width:34px;height:2.6px;background:#8cc63f"></div>
<div class="a" style="left:194px;top:423.50px;width:95.40px;height:1.4px;background:linear-gradient(90deg,#6b9a47 0%,#6b9a47 55%,#c9a83a 70%,#b93530 90%,#b93530 100%)"></div>
<div class="t" style="left:194px;top:428.75px;font-size:5.9px;color:#9a9a9a;transform:scaleX(0.905);transform-origin:0 50%;-webkit-text-stroke:0.1px #9a9a9a;">zeer goed</div>
<div class="t" style="right:510px;top:428.75px;font-size:5.9px;color:#9a9a9a;text-align:right;transform:scaleX(0.905);transform-origin:100% 50%;-webkit-text-stroke:0.1px #9a9a9a;">slecht</div>
<div class="t" style="left:299.2px;top:380.85px;font-size:5.9px;color:#e4e4e4;transform:scaleX(0.905);transform-origin:0 50%;-webkit-text-stroke:0.1px #e4e4e4;">Condenswater: 0,0020 kg/m&#178;</div>
<div class="a" style="left:299.2px;top:387.00px;width:96.5px;height:5.2px;background:#484848"></div>
<div class="a" style="left:395.10px;top:386.80px;width:0.6px;height:5.4px;background:#8a8a8a"></div>
<div class="a" style="left:299.2px;top:387.50px;width:1.5px;height:2.6px;background:#8cc63f"></div>
<div class="a" style="left:299.2px;top:390.30px;width:95.90px;height:1.4px;background:linear-gradient(90deg,#6b9a47 0%,#6b9a47 55%,#c9a83a 70%,#b93530 90%,#b93530 100%)"></div>
<div class="t" style="left:299.2px;top:397.55px;font-size:5.9px;color:#e4e4e4;transform:scaleX(0.905);transform-origin:0 50%;-webkit-text-stroke:0.1px #e4e4e4;">Houtvochtgehalte: +0,0 %</div>
<div class="a" style="left:299.2px;top:403.80px;width:96.5px;height:5.2px;background:#484848"></div>
<div class="a" style="left:395.10px;top:403.60px;width:0.6px;height:5.4px;background:#8a8a8a"></div>
<div class="a" style="left:299.2px;top:404.30px;width:1.5px;height:2.6px;background:#8cc63f"></div>
<div class="a" style="left:299.2px;top:407.10px;width:95.90px;height:1.4px;background:linear-gradient(90deg,#6b9a47 0%,#6b9a47 25%,#c9a83a 38%,#b93530 48%,#b93530 100%)"></div>
<div class="t" style="left:299.2px;top:414.45px;font-size:5.9px;color:#e4e4e4;transform:scaleX(0.905);transform-origin:0 50%;-webkit-text-stroke:0.1px #e4e4e4;">Droogtijd: 37 dagen</div>
<div class="a" style="left:299.2px;top:420.20px;width:96.5px;height:5.2px;background:#484848"></div>
<div class="a" style="left:395.10px;top:420.00px;width:0.6px;height:5.4px;background:#8a8a8a"></div>
<div class="a" style="left:299.2px;top:420.70px;width:36px;height:2.6px;background:#8cc63f"></div>
<div class="a" style="left:299.2px;top:423.50px;width:95.90px;height:1.4px;background:linear-gradient(90deg,#6b9a47 0%,#6b9a47 55%,#c9a83a 70%,#b93530 90%,#b93530 100%)"></div>
<div class="t" style="left:299.2px;top:428.75px;font-size:5.9px;color:#9a9a9a;transform:scaleX(0.905);transform-origin:0 50%;-webkit-text-stroke:0.1px #9a9a9a;">zeer goed</div>
<div class="t" style="right:404.3px;top:428.75px;font-size:5.9px;color:#9a9a9a;text-align:right;transform:scaleX(0.905);transform-origin:100% 50%;-webkit-text-stroke:0.1px #9a9a9a;">slecht</div>
<div class="t" style="left:404px;top:381.25px;font-size:5.9px;color:#e4e4e4;transform:scaleX(0.905);transform-origin:0 50%;-webkit-text-stroke:0.1px #e4e4e4;">&#956;d-waarde: 1004 m</div>
<div class="t" style="right:299px;top:381.25px;font-size:5.9px;color:#e4e4e4;text-align:right;transform:scaleX(0.905);transform-origin:100% 50%;-webkit-text-stroke:0.1px #e4e4e4;">Dikte: 25,05 cm</div>
<div class="t" style="right:299px;top:388.75px;font-size:5.9px;color:#e4e4e4;text-align:right;transform:scaleX(0.905);transform-origin:100% 50%;-webkit-text-stroke:0.1px #e4e4e4;">Gewicht: 57 kg/m&#178;</div>
<div class="t" style="left:404px;top:397.05px;font-size:5.9px;color:#e4e4e4;transform:scaleX(0.905);transform-origin:0 50%;-webkit-text-stroke:0.1px #e4e4e4;">Oppervlakte binnen: 18,4&#176;C (55%)</div>
<div class="a" style="left:404px;top:403.00px;width:97px;height:5.2px;background:#484848"></div>
<div class="a" style="left:500.40px;top:402.80px;width:0.6px;height:5.4px;background:#8a8a8a"></div>
<div class="a" style="left:404px;top:403.50px;width:44px;height:2.6px;background:#8cc63f"></div>
<div class="a" style="left:404px;top:406.30px;width:96.40px;height:1.4px;background:linear-gradient(90deg,#b93530 0%,#b93530 15%,#c9a83a 30%,#6b9a47 45%,#6b9a47 100%)"></div>
<div class="t" style="left:404px;top:413.95px;font-size:5.9px;color:#e4e4e4;transform:scaleX(0.905);transform-origin:0 50%;-webkit-text-stroke:0.1px #e4e4e4;">Droogreserve: 3 g/m&#178;a</div>
<div class="a" style="left:404px;top:420.40px;width:97px;height:5.2px;background:#484848"></div>
<div class="a" style="left:500.40px;top:420.20px;width:0.6px;height:5.4px;background:#8a8a8a"></div>
<div class="a" style="left:404px;top:423.70px;width:96.40px;height:1.4px;background:linear-gradient(90deg,#b93530 0%,#b93530 45%,#c9a83a 52%,#6b9a47 58%,#6b9a47 100%)"></div>
<div class="a" style="left:404.2px;top:420.3px;width:2px;height:2px;background:#e00000;border-radius:1px"></div>
<div class="t" style="left:404px;top:428.45px;font-size:5.9px;color:#9a9a9a;transform:scaleX(0.905);transform-origin:0 50%;-webkit-text-stroke:0.1px #9a9a9a;">slecht</div>
<div class="t" style="right:299px;top:428.45px;font-size:5.9px;color:#9a9a9a;text-align:right;transform:scaleX(0.905);transform-origin:100% 50%;-webkit-text-stroke:0.1px #9a9a9a;">zeer goed</div>
<div class="t" style="left:509.2px;top:381.25px;font-size:5.9px;color:#e4e4e4;transform:scaleX(0.905);transform-origin:0 50%;-webkit-text-stroke:0.1px #e4e4e4;">Temp. ampl. demping (1/TAV): 9,9</div>
<div class="a" style="left:509.2px;top:386.80px;width:96.50000000000006px;height:5.2px;background:#484848"></div>
<div class="a" style="left:605.10px;top:386.60px;width:0.6px;height:5.4px;background:#8a8a8a"></div>
<div class="a" style="left:509.2px;top:387.30px;width:47.4px;height:2.6px;background:#8cc63f"></div>
<div class="a" style="left:509.2px;top:390.10px;width:95.90px;height:1.4px;background:linear-gradient(90deg,#b93530 0%,#b93530 5%,#c9a83a 12%,#c9a83a 28%,#6b9a47 35%,#6b9a47 100%)"></div>
<div class="t" style="left:509.2px;top:397.55px;font-size:5.9px;color:#e4e4e4;transform:scaleX(0.905);transform-origin:0 50%;-webkit-text-stroke:0.1px #e4e4e4;">Faseverschuiving: 10 h</div>
<div class="a" style="left:509.2px;top:403.60px;width:96.50000000000006px;height:5.2px;background:#484848"></div>
<div class="a" style="left:605.10px;top:403.40px;width:0.6px;height:5.4px;background:#8a8a8a"></div>
<div class="a" style="left:509.2px;top:404.10px;width:53.8px;height:2.6px;background:#8cc63f"></div>
<div class="a" style="left:509.2px;top:406.90px;width:95.90px;height:1.4px;background:linear-gradient(90deg,#b93530 0%,#b93530 9%,#c9a83a 16%,#c9a83a 35%,#6b9a47 42%,#6b9a47 100%)"></div>
<div class="t" style="left:509.2px;top:414.45px;font-size:5.9px;color:#e4e4e4;transform:scaleX(0.905);transform-origin:0 50%;-webkit-text-stroke:0.1px #e4e4e4;">Interne opslagcapaciteit: 34 kJ/m&#178;K</div>
<div class="a" style="left:509.2px;top:420.20px;width:96.50000000000006px;height:5.2px;background:#484848"></div>
<div class="a" style="left:605.10px;top:420.00px;width:0.6px;height:5.4px;background:#8a8a8a"></div>
<div class="a" style="left:509.2px;top:420.70px;width:32.8px;height:2.6px;background:#d4d000"></div>
<div class="a" style="left:509.2px;top:423.50px;width:95.90px;height:1.4px;background:linear-gradient(90deg,#b93530 0%,#b93530 15%,#c9a83a 22%,#c9a83a 40%,#6b9a47 47%,#6b9a47 100%)"></div>
<div class="t" style="left:509.2px;top:428.75px;font-size:5.9px;color:#9a9a9a;transform:scaleX(0.905);transform-origin:0 50%;-webkit-text-stroke:0.1px #9a9a9a;">slecht</div>
<div class="t" style="right:194.29999999999995px;top:428.75px;font-size:5.9px;color:#9a9a9a;text-align:right;transform:scaleX(0.905);transform-origin:100% 50%;-webkit-text-stroke:0.1px #9a9a9a;">zeer goed</div>
</body></html>
